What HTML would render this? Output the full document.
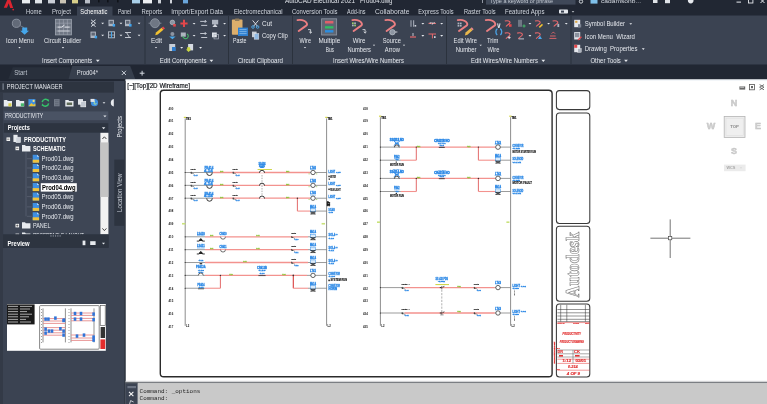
<!DOCTYPE html>
<html><head><meta charset="utf-8"><title>AutoCAD Electrical 2021 - Prod04.dwg</title>
<style>
html,body{margin:0;padding:0;background:#fff}
body{width:767px;height:404px;overflow:hidden;position:relative;font-family:"Liberation Sans",sans-serif}
text{white-space:pre}
</style></head><body>
<svg width="767" height="404" viewBox="0 0 767 404" style="position:absolute;left:0;top:0;display:block;will-change:transform" font-family='"Liberation Sans",sans-serif'>
<rect x="0" y="0" width="767" height="404" fill="#ffffff"/>
<rect x="0" y="0" width="767" height="16" fill="#212733"/>
<rect x="0" y="64" width="767" height="15.5" fill="#212733"/>
<rect x="0" y="15.5" width="767" height="49" fill="#3b4352"/>
<path d="M3.8 7.8 L7.2 0 L10.4 0 L13.2 8 L10.2 8 L8.7 3.2 L7 7.8 Z" fill="#dc2430"/>
<circle cx="13.2" cy="9.6" r="0.9" fill="#d8232f"/>
<rect x="22" y="0" width="8" height="3.4" fill="#e9ecf0"/>
<rect x="35" y="0" width="7" height="3.4" fill="#dfe3e8"/>
<rect x="48" y="0" width="7" height="3.4" fill="#c9ced6"/>
<rect x="60" y="0" width="6" height="3.4" fill="#c9c3b4"/>
<rect x="72" y="0" width="6" height="3.4" fill="#d8cf8a"/>
<rect x="85" y="0" width="5" height="3.4" fill="#b9bec7"/>
<rect x="132" y="0" width="8" height="3.4" fill="#a9cfe8"/>
<rect x="143" y="0" width="9" height="3.4" fill="#eef0f3"/>
<rect x="158" y="0" width="3" height="3.4" fill="#cfd3d9"/>
<rect x="170" y="0" width="2" height="3.4" fill="#cfd3d9"/>
<rect x="183" y="0" width="5" height="3.4" fill="#6aa6dc"/>
<rect x="98" y="0" width="1.6" height="2.4" fill="#0f1319"/>
<rect x="107" y="0" width="1.6" height="2.4" fill="#0f1319"/>
<rect x="117" y="0" width="1.6" height="2.4" fill="#0f1319"/>
<text x="285.0" y="2.6" font-size="6.6" fill="#e0e4ea" font-weight="normal" textLength="70.0" lengthAdjust="spacingAndGlyphs">AutoCAD Electrical 2021</text>
<text x="360.0" y="2.6" font-size="6.6" fill="#e0e4ea" font-weight="normal" textLength="32.5" lengthAdjust="spacingAndGlyphs">Prod04.dwg</text>
<rect x="486" y="0" width="89.5" height="4.6" fill="#3f4858"/>
<rect x="482.2" y="0" width="0.8" height="3" fill="#aeb5c0"/>
<text x="490.0" y="3.1" font-size="6" fill="#c3c9d3" font-weight="normal" textLength="63.0" lengthAdjust="spacingAndGlyphs">Type a keyword or phrase</text>
<circle cx="581" cy="1.5" r="1.7" fill="none" stroke="#dfe3e8" stroke-width="0.9"/>
<rect x="590.5" y="0" width="7" height="3.6" fill="#7fc0ea"/>
<text x="601.0" y="3.0" font-size="6" fill="#d5dae2" font-weight="normal" textLength="40.0" lengthAdjust="spacingAndGlyphs">cadamsonb...</text>
<rect x="653" y="0" width="4.5" height="3" fill="#dfe3e8"/>
<rect x="665" y="0" width="5" height="3.2" fill="#dfe3e8"/>
<circle cx="690.7" cy="0.6" r="2.8" fill="#e6e9ee"/>
<rect x="736.5" y="1.6" width="4.5" height="1" fill="#e6e9ee"/>
<rect x="748.5" y="-1" width="4.4" height="4" fill="none" stroke="#e6e9ee" stroke-width="0.9"/>
<path d="M760.5 -1l4 4m0 -4l-4 4" stroke="#e6e9ee" stroke-width="1"/>
<rect x="77" y="6.5" width="35.5" height="9.5" fill="#3b4352"/>
<text x="26.0" y="14.0" font-size="6.6" fill="#d3d8e0" font-weight="normal" textLength="15.7" lengthAdjust="spacingAndGlyphs">Home</text>
<text x="52.0" y="14.0" font-size="6.6" fill="#d3d8e0" font-weight="normal" textLength="19.0" lengthAdjust="spacingAndGlyphs">Project</text>
<text x="80.3" y="14.0" font-size="6.6" fill="#ffffff" font-weight="normal" textLength="27.1" lengthAdjust="spacingAndGlyphs">Schematic</text>
<text x="117.9" y="14.0" font-size="6.6" fill="#d3d8e0" font-weight="normal" textLength="13.1" lengthAdjust="spacingAndGlyphs">Panel</text>
<text x="141.6" y="14.0" font-size="6.6" fill="#d3d8e0" font-weight="normal" textLength="20.6" lengthAdjust="spacingAndGlyphs">Reports</text>
<text x="171.3" y="14.0" font-size="6.6" fill="#d3d8e0" font-weight="normal" textLength="51.7" lengthAdjust="spacingAndGlyphs">Import/Export Data</text>
<text x="234.0" y="14.0" font-size="6.6" fill="#d3d8e0" font-weight="normal" textLength="48.5" lengthAdjust="spacingAndGlyphs">Electromechanical</text>
<text x="292.0" y="14.0" font-size="6.6" fill="#d3d8e0" font-weight="normal" textLength="45.5" lengthAdjust="spacingAndGlyphs">Conversion Tools</text>
<text x="347.0" y="14.0" font-size="6.6" fill="#d3d8e0" font-weight="normal" textLength="18.5" lengthAdjust="spacingAndGlyphs">Add-ins</text>
<text x="375.0" y="14.0" font-size="6.6" fill="#d3d8e0" font-weight="normal" textLength="34.5" lengthAdjust="spacingAndGlyphs">Collaborate</text>
<text x="418.3" y="14.0" font-size="6.6" fill="#d3d8e0" font-weight="normal" textLength="35.2" lengthAdjust="spacingAndGlyphs">Express Tools</text>
<text x="464.0" y="14.0" font-size="6.6" fill="#d3d8e0" font-weight="normal" textLength="31.5" lengthAdjust="spacingAndGlyphs">Raster Tools</text>
<text x="505.0" y="14.0" font-size="6.6" fill="#d3d8e0" font-weight="normal" textLength="39.5" lengthAdjust="spacingAndGlyphs">Featured Apps</text>
<rect x="559" y="9.6" width="9" height="4" rx="0.8" fill="#e6e9ee"/>
<rect x="561" y="10.6" width="3" height="2" fill="#3b4352"/>
<path d="M571.7 11.2h2.6l-1.3 1.4z" fill="#e6e9ee"/>
<line x1="145" y1="16" x2="145" y2="64" stroke="#2b323d" stroke-width="1"/>
<line x1="228.5" y1="16" x2="228.5" y2="64" stroke="#2b323d" stroke-width="1"/>
<line x1="292.5" y1="16" x2="292.5" y2="64" stroke="#2b323d" stroke-width="1"/>
<line x1="446.5" y1="16" x2="446.5" y2="64" stroke="#2b323d" stroke-width="1"/>
<line x1="571" y1="16" x2="571" y2="64" stroke="#2b323d" stroke-width="1"/>
<circle cx="16.4" cy="23.3" r="4.1" fill="#626a78" stroke="#959daa" stroke-width="0.8"/>
<line x1="20" y1="25.6" x2="24" y2="27.6" stroke="#7f8794" stroke-width="0.8"/>
<path d="M22.2 27.6h5v3.2h1.8l-4.4 4-4.4-4h2z" fill="#45a6ea"/>
<text x="6.0" y="43.4" font-size="6.8" fill="#e6e9ee" font-weight="normal" textLength="27.7" lengthAdjust="spacingAndGlyphs">Icon Menu</text>
<path d="M18.3 47.1h2.4l-1.2 1.3z" fill="#e6e9ee"/>
<g transform="translate(0.6,0.4)"><rect x="54.8" y="18.9" width="16" height="15.6" fill="#6f7784" stroke="#9da4af" stroke-width="0.8"/>
<line x1="55" y1="22.8" x2="70.6" y2="22.8" stroke="#a9afba" stroke-width="0.5"/>
<line x1="55" y1="26.7" x2="70.6" y2="26.7" stroke="#a9afba" stroke-width="0.5"/>
<line x1="55" y1="30.6" x2="70.6" y2="30.6" stroke="#a9afba" stroke-width="0.5"/>
<line x1="58.8" y1="19" x2="58.8" y2="34.4" stroke="#a9afba" stroke-width="0.5"/>
<line x1="62.8" y1="19" x2="62.8" y2="34.4" stroke="#a9afba" stroke-width="0.5"/>
<line x1="66.8" y1="19" x2="66.8" y2="34.4" stroke="#a9afba" stroke-width="0.5"/>
<line x1="57" y1="26.7" x2="61" y2="26.7" stroke="#e6e9ee" stroke-width="0.9"/>
<line x1="61" y1="26.7" x2="64" y2="24.6" stroke="#e6e9ee" stroke-width="0.9"/>
<line x1="64" y1="26.7" x2="69" y2="26.7" stroke="#e6e9ee" stroke-width="0.9"/>
<line x1="57" y1="30.6" x2="69" y2="30.6" stroke="#d5d9e0" stroke-width="0.8"/>
</g>
<text x="44.0" y="43.4" font-size="6.8" fill="#e6e9ee" font-weight="normal" textLength="37.2" lengthAdjust="spacingAndGlyphs">Circuit Builder</text>
<path d="M61.8 47.1h2.4l-1.2 1.3z" fill="#e6e9ee"/>
<path d="M91.0 19.8l4.6 3.4l-4.6 3.4m4.6-6.8l-4.6 3.4l4.6 3.4" fill="none" stroke="#cfd4dc" stroke-width="1"/>
<path d="M101.2 22.7h2.9l-1.4 1.6z" fill="#e6e9ee"/>
<rect x="90.5" y="31.6" width="5.4" height="6.4" fill="#aeb5c0"/>
<rect x="91.5" y="32.6" width="3.4" height="3" fill="#5f6775"/>
<rect x="94.7" y="35.8" width="2.4" height="2.6" fill="#3fa3ec"/>
<path d="M101.2 34.7h2.9l-1.4 1.6z" fill="#e6e9ee"/>
<rect x="108.5" y="19.8" width="5.4" height="6.4" fill="#aeb5c0"/>
<rect x="109.5" y="20.8" width="3.4" height="3" fill="#5f6775"/>
<rect x="112.7" y="24.0" width="2.4" height="2.6" fill="#3fa3ec"/>
<path d="M119.5 22.7h2.9l-1.4 1.6z" fill="#e6e9ee"/>
<rect x="108.5" y="31.8" width="6" height="6" fill="none" stroke="#b9c0ca" stroke-width="0.9"/>
<line x1="108.5" y1="35" x2="114.5" y2="35" stroke="#b9c0ca" stroke-width="0.8"/>
<line x1="111.5" y1="31.8" x2="111.5" y2="38" stroke="#49a8ea" stroke-width="1"/>
<path d="M119.5 34.7h2.9l-1.4 1.6z" fill="#e6e9ee"/>
<rect x="125" y="19.8" width="5.4" height="6.4" fill="#aeb5c0"/>
<rect x="126" y="20.8" width="3.4" height="3" fill="#5f6775"/>
<rect x="129.2" y="24.0" width="2.4" height="2.6" fill="#3fa3ec"/>
<path d="M137.6 22.7h2.9l-1.4 1.6z" fill="#e6e9ee"/>
<path d="M125 32.5h6m-6 5h6m-4.5-5l3 5" fill="none" stroke="#cfd4dc" stroke-width="0.9"/>
<path d="M137.6 34.7h2.9l-1.4 1.6z" fill="#e6e9ee"/>
<text x="42.0" y="62.8" font-size="6.8" fill="#e6e9ee" font-weight="normal" textLength="50.3" lengthAdjust="spacingAndGlyphs">Insert Components</text>
<path d="M95.9 59.8h3.8l-1.9 2.1z" fill="#e6e9ee"/>
<circle cx="155" cy="23.2" r="4.5" fill="#6f7784" stroke="#98a0ac" stroke-width="0.7"/>
<line x1="150" y1="23.2" x2="148.6" y2="23.2" stroke="#98a0ac" stroke-width="0.8"/>
<line x1="160" y1="23.2" x2="161.4" y2="23.2" stroke="#98a0ac" stroke-width="0.8"/>
<path d="M156 32.4l5.6-4.6 1.8 2-5.6 4.6-2.6 0.8z" fill="#f2c230"/>
<path d="M161.6 27.8l1.6-1.3 1.8 2-1.6 1.3z" fill="#e2474b"/>
<text x="150.9" y="43.4" font-size="6.8" fill="#e6e9ee" font-weight="normal" textLength="11.1" lengthAdjust="spacingAndGlyphs">Edit</text>
<path d="M154.8 47.0h2.4l-1.2 1.3z" fill="#e6e9ee"/>
<circle cx="172.4" cy="22.4" r="2.3" fill="#8d95a2" stroke="#c3c9d2" stroke-width="0.6"/>
<rect x="173.20000000000002" y="24.0" width="2.6" height="2.6" fill="#e2474b"/>
<circle cx="172.4" cy="34.1" r="2" fill="#8d95a2"/>
<path d="M169.20000000000002 36.5h6.4l-3.2 2.8z" fill="#49a8ea"/>
<path d="M180.4 22.4h7.2v2h-7.2zM183 19.799999999999997h2v7.2h-2z" fill="#e2474b"/>
<rect x="180.8" y="32.5" width="5" height="4.2" fill="#aeb5c0"/>
<path d="M183 35.9a2.6 2.6 0 1 0 4 -2" fill="none" stroke="#46b86a" stroke-width="1.1"/>
<path d="M200.2 21.4h6l-1.4-1.4m1.4 1.4l-1.4 1.4M207.2 25.4h-6" fill="none" stroke="#cfd4dc" stroke-width="0.9"/>
<path d="M200.2 33.5h6l-1.4-1.4m1.4 1.4l-1.4 1.4M207.2 37.5h-6" fill="none" stroke="#cfd4dc" stroke-width="0.9"/>
<rect x="212" y="19.799999999999997" width="6.2" height="4.6" fill="#aeb5c0"/>
<path d="M215 23.799999999999997l2.6 3.2h-5.2z" fill="#cfd4dc"/>
<rect x="212" y="32.5" width="4.8" height="4.8" fill="#dfe3e9"/>
<rect x="214" y="34.5" width="4.4" height="4.4" fill="none" stroke="#aeb5c0" stroke-width="0.7"/>
<path d="M192.6 22.9h2.9l-1.4 1.6z" fill="#e6e9ee"/>
<path d="M192.6 35.0h2.9l-1.4 1.6z" fill="#e6e9ee"/>
<path d="M223.1 22.9h2.9l-1.4 1.6z" fill="#e6e9ee"/>
<path d="M223.1 35.0h2.9l-1.4 1.6z" fill="#e6e9ee"/>
<rect x="169.20000000000002" y="44.0" width="6" height="7" fill="#c8ced7"/>
<rect x="172.0" y="47.0" width="3.6" height="4" fill="#2f7fd0"/>
<path d="M180.2 47.1h2.9l-1.4 1.6z" fill="#e6e9ee"/>
<rect x="188.1" y="44.0" width="5" height="6.4" fill="#d6dbe2"/>
<path d="M187.1 47.2h3v2.4h1.2l-2.7 2.4-2.7-2.4h1.2z" fill="#c9d644"/>
<path d="M199.1 47.1h2.9l-1.4 1.6z" fill="#e6e9ee"/>
<text x="159.8" y="62.8" font-size="6.8" fill="#e6e9ee" font-weight="normal" textLength="46.7" lengthAdjust="spacingAndGlyphs">Edit Components</text>
<path d="M209.5 59.8h3.8l-1.9 2.1z" fill="#e6e9ee"/>
<rect x="231.9" y="19.6" width="10.6" height="15.2" rx="0.8" fill="#dcae6c"/>
<rect x="235" y="18.4" width="4.4" height="2.6" rx="0.6" fill="#8f7a5a"/>
<rect x="238" y="27.6" width="10" height="8.4" fill="#2f7fd0"/>
<line x1="239.4" y1="29.6" x2="246.6" y2="29.6" stroke="#a9d2f4" stroke-width="0.6"/>
<line x1="239.4" y1="31.6" x2="246.6" y2="31.6" stroke="#a9d2f4" stroke-width="0.6"/>
<line x1="239.4" y1="33.6" x2="246.6" y2="33.6" stroke="#a9d2f4" stroke-width="0.6"/>
<text x="233.0" y="43.4" font-size="6.8" fill="#e6e9ee" font-weight="normal" textLength="13.5" lengthAdjust="spacingAndGlyphs">Paste</text>
<path d="M252.6 20.4l5 6m0.8-6l-5 6" stroke="#e6e9ee" stroke-width="0.9" fill="none"/>
<circle cx="253" cy="27" r="1.3" fill="none" stroke="#49a8ea" stroke-width="0.9"/><circle cx="257.6" cy="27" r="1.3" fill="none" stroke="#49a8ea" stroke-width="0.9"/>
<text x="262.0" y="26.0" font-size="6.8" fill="#e6e9ee" font-weight="normal" textLength="10.0" lengthAdjust="spacingAndGlyphs">Cut</text>
<rect x="252" y="31.6" width="4.6" height="5.6" fill="#c8ced7"/><rect x="254.2" y="33.6" width="4.6" height="5.6" fill="#8fb9e4" stroke="#dfe3e9" stroke-width="0.5"/>
<text x="262.0" y="38.0" font-size="6.8" fill="#e6e9ee" font-weight="normal" textLength="25.8" lengthAdjust="spacingAndGlyphs">Copy Clip</text>
<text x="237.7" y="62.8" font-size="6.8" fill="#e6e9ee" font-weight="normal" textLength="45.3" lengthAdjust="spacingAndGlyphs">Circuit Clipboard</text>
<path d="M297.5 20.1C301.0 19.6 305.1 20.6 306.8 23.2C307.6 24.7 306.4 25.8 305.2 26.4L298.7 31.0" fill="none" stroke="#ec7f82" stroke-width="1.9" stroke-linecap="round" stroke-linejoin="round"/>
<path d="M308 29.6h2.6v3.4m-1.4-1.2l1.4 1.4 1.4-1.4" fill="none" stroke="#e6e9ee" stroke-width="0.8"/>
<text x="299.6" y="43.4" font-size="6.8" fill="#e6e9ee" font-weight="normal" textLength="11.4" lengthAdjust="spacingAndGlyphs">Wire</text>
<path d="M303.8 47.0h2.4l-1.2 1.3z" fill="#e6e9ee"/>
<rect x="321.6" y="18.8" width="15" height="16.2" fill="#5f6673" stroke="#8a92a0" stroke-width="0.9"/>
<rect x="325" y="20.9" width="8.4" height="2.6" fill="#e0606a"/>
<rect x="325" y="26.2" width="8.4" height="2.3" fill="#2fc063"/>
<rect x="325" y="30.1" width="8.4" height="2.4" fill="#2c8de0"/>
<text x="318.4" y="43.4" font-size="6.8" fill="#e6e9ee" font-weight="normal" textLength="21.9" lengthAdjust="spacingAndGlyphs">Multiple</text>
<text x="325.7" y="51.9" font-size="6.8" fill="#e6e9ee" font-weight="normal" textLength="8.3" lengthAdjust="spacingAndGlyphs">Bus</text>
<path d="M352.4 20.1C355.9 19.6 360.0 20.6 361.7 23.2C362.5 24.7 361.3 25.8 360.1 26.4L353.6 31.0" fill="none" stroke="#ec7f82" stroke-width="1.9" stroke-linecap="round" stroke-linejoin="round"/>
<rect x="352" y="22.4" width="1.7" height="1.7" fill="#9fd06a"/>
<rect x="354.2" y="22.4" width="1.7" height="1.7" fill="#aeb5c0"/>
<rect x="352" y="24.6" width="1.7" height="1.7" fill="#aeb5c0"/>
<rect x="354.2" y="24.6" width="1.7" height="1.7" fill="#9fd06a"/>
<path d="M362.5 29.6h2.6v3.4m-1.4-1.2l1.4 1.4 1.4-1.4" fill="none" stroke="#e6e9ee" stroke-width="0.8"/>
<text x="352.8" y="43.4" font-size="6.8" fill="#e6e9ee" font-weight="normal" textLength="12.6" lengthAdjust="spacingAndGlyphs">Wire</text>
<text x="347.6" y="51.9" font-size="6.8" fill="#e6e9ee" font-weight="normal" textLength="23.4" lengthAdjust="spacingAndGlyphs">Numbers</text>
<path d="M372.8 44.8h2.4l-1.2 1.3z" fill="#e6e9ee"/>
<path d="M385.4 20.1C388.9 19.6 393.0 20.6 394.7 23.2C395.5 24.7 394.3 25.8 393.1 26.4L386.6 31.0" fill="none" stroke="#ec7f82" stroke-width="1.9" stroke-linecap="round" stroke-linejoin="round"/>
<circle cx="392.4" cy="32.2" r="2.7" fill="#8d95a2" stroke="#c8ced7" stroke-width="0.6"/>
<line x1="395" y1="32" x2="397.4" y2="32" stroke="#e6e9ee" stroke-width="0.8"/>
<text x="382.7" y="43.4" font-size="6.8" fill="#e6e9ee" font-weight="normal" textLength="18.2" lengthAdjust="spacingAndGlyphs">Source</text>
<text x="384.8" y="51.9" font-size="6.8" fill="#e6e9ee" font-weight="normal" textLength="15.0" lengthAdjust="spacingAndGlyphs">Arrow</text>
<path d="M402.8 44.8h2.4l-1.2 1.3z" fill="#e6e9ee"/>
<path d="M411 20.2v6.6m2.6-6.6v6.6" stroke="#9aa1ad" stroke-width="1.2"/>
<rect x="414.6" y="25" width="1.6" height="1.6" fill="#cfd4dc"/>
<path d="M421.4 22.9h2.9l-1.4 1.6z" fill="#e6e9ee"/>
<line x1="428.5" y1="23.4" x2="436" y2="23.4" stroke="#e8686c" stroke-width="1"/>
<text x="429.6" y="23.8" font-size="3.4" fill="#e6e9ee" font-weight="normal" textLength="5.4" lengthAdjust="spacingAndGlyphs">xyz</text>
<path d="M440.2 22.9h2.9l-1.4 1.6z" fill="#e6e9ee"/>
<line x1="410" y1="37" x2="416" y2="37" stroke="#e8686c" stroke-width="1.2"/>
<line x1="413" y1="33" x2="413" y2="36" stroke="#cfd4dc" stroke-width="0.9"/>
<path d="M421.4 35.1h2.9l-1.4 1.6z" fill="#e6e9ee"/>
<line x1="428.5" y1="34" x2="436" y2="34" stroke="#e8686c" stroke-width="1"/>
<line x1="432.4" y1="34" x2="432.4" y2="38.4" stroke="#e8686c" stroke-width="1"/>
<rect x="434" y="36.2" width="1.6" height="1.8" fill="#cfd4dc"/>
<path d="M440.2 35.1h2.9l-1.4 1.6z" fill="#e6e9ee"/>
<text x="333.0" y="62.8" font-size="6.8" fill="#e6e9ee" font-weight="normal" textLength="71.0" lengthAdjust="spacingAndGlyphs">Insert Wires/Wire Numbers</text>
<path d="M457.8 20.1C461.3 19.6 465.4 20.6 467.1 23.2C467.9 24.7 466.7 25.8 465.5 26.4L459.0 31.0" fill="none" stroke="#ec7f82" stroke-width="1.9" stroke-linecap="round" stroke-linejoin="round"/>
<rect x="457.6" y="22.6" width="1.7" height="1.7" fill="#aeb5c0"/>
<rect x="459.9" y="22.6" width="1.7" height="1.7" fill="#aeb5c0"/>
<rect x="457.6" y="24.9" width="1.7" height="1.7" fill="#aeb5c0"/>
<rect x="459.9" y="24.9" width="1.7" height="1.7" fill="#aeb5c0"/>
<path d="M465.6 32.6l5-4.4 1.9 2.1-5 4.4-2.6 0.8z" fill="#e9b84c"/><path d="M470.6 28.2l1.2-1 1.9 2.1-1.2 1z" fill="#e98a8e"/>
<text x="453.6" y="43.4" font-size="6.8" fill="#e6e9ee" font-weight="normal" textLength="23.4" lengthAdjust="spacingAndGlyphs">Edit Wire</text>
<text x="455.7" y="51.9" font-size="6.8" fill="#e6e9ee" font-weight="normal" textLength="20.8" lengthAdjust="spacingAndGlyphs">Number</text>
<path d="M479.5 44.8h2.4l-1.2 1.3z" fill="#e6e9ee"/>
<path d="M485.8 20.1C489.3 19.6 493.4 20.6 495.1 23.2C495.9 24.7 494.7 25.8 493.5 26.4L487.0 31.0" fill="none" stroke="#ec7f82" stroke-width="1.9" stroke-linecap="round" stroke-linejoin="round"/>
<path d="M497.4 28.6c-2 1.4-2 4.6-0.2 6.4M500.2 28.6c2 1.4 2 4.6 0.2 6.4" fill="none" stroke="#4aa3e6" stroke-width="1.3"/>
<path d="M497.6 23.4l1 4.6M500 23.4l-1 4.6" stroke="#d5dae2" stroke-width="1.1"/>
<text x="487.0" y="42.6" font-size="6.8" fill="#e6e9ee" font-weight="normal" textLength="11.5" lengthAdjust="spacingAndGlyphs">Trim</text>
<text x="487.6" y="51.9" font-size="6.8" fill="#e6e9ee" font-weight="normal" textLength="11.9" lengthAdjust="spacingAndGlyphs">Wire</text>
<path d="M504.8 21.0c3-0.8 5.4 0 5.2 1.6c-0.2 1.4-3 2.2-4 4" fill="none" stroke="#e8686c" stroke-width="1.1"/>
<rect x="509.0" y="24.2" width="2.6" height="2.6" fill="#e2474b"/>
<rect x="518" y="19.8" width="4" height="7" fill="#6f7784"/>
<path d="M524 24.4v3.2m-1.6-1.6h3.2" stroke="#46b86a" stroke-width="1"/>
<path d="M528.5 22.9h2.9l-1.4 1.6z" fill="#e6e9ee"/>
<path d="M535.0 21.0c3-0.8 5.4 0 5.2 1.6c-0.2 1.4-3 2.2-4 4" fill="none" stroke="#e8686c" stroke-width="1.1"/>
<path d="M538.8 26.799999999999997l3.2-3 1 1.1-3.2 3z" fill="#f2c230"/>
<path d="M547.1 22.9h2.9l-1.4 1.6z" fill="#e6e9ee"/>
<path d="M552.6 21.0c3-0.8 5.4 0 5.2 1.6c-0.2 1.4-3 2.2-4 4" fill="none" stroke="#e8686c" stroke-width="1.1"/>
<rect x="557.4" y="23.799999999999997" width="1.8" height="3.2" fill="#aeb5c0"/>
<path d="M564.8 22.9h2.9l-1.4 1.6z" fill="#e6e9ee"/>
<path d="M504.8 33.1c3-0.8 5.4 0 5.2 1.6c-0.2 1.4-3 2.2-4 4" fill="none" stroke="#e8686c" stroke-width="1.1"/>
<path d="M509.2 36.1v3m-1.5-1.5h3" stroke="#e6e9ee" stroke-width="0.8"/>
<path d="M517.2 33.1c3-0.8 5.4 0 5.2 1.6c-0.2 1.4-3 2.2-4 4" fill="none" stroke="#e8686c" stroke-width="1.1"/>
<line x1="518.6" y1="38.9" x2="524.0" y2="38.9" stroke="#cfd4dc" stroke-width="0.9"/>
<path d="M528.5 35.1h2.9l-1.4 1.6z" fill="#e6e9ee"/>
<path d="M535.0 33.1c3-0.8 5.4 0 5.2 1.6c-0.2 1.4-3 2.2-4 4" fill="none" stroke="#e8686c" stroke-width="1.1"/>
<path d="M538.0 39.1l2-3.4 2 3.4z" fill="#49a8ea"/>
<path d="M549.4 38.4h7M550 36h5.6M551.6 33.6c1-1.6 2.6-1.6 3.4 0" fill="none" stroke="#e8686c" stroke-width="0.9"/>
<text x="470.9" y="62.8" font-size="6.8" fill="#e6e9ee" font-weight="normal" textLength="67.1" lengthAdjust="spacingAndGlyphs">Edit Wires/Wire Numbers</text>
<path d="M541.4 59.8h3.8l-1.9 2.1z" fill="#e6e9ee"/>
<rect x="574.2" y="19.8" width="6" height="7.4" fill="#e4e7ec"/>
<rect x="575.2" y="20.8" width="2.2" height="2" fill="#d9a441"/><rect x="578.0" y="24.200000000000003" width="3.2" height="3.2" fill="#7d8593"/>
<text x="584.8" y="26.3" font-size="7.2" fill="#e6e9ee" font-weight="normal" textLength="40.2" lengthAdjust="spacingAndGlyphs">Symbol Builder</text>
<path d="M629.3 23.2h2.9l-1.4 1.6z" fill="#e6e9ee"/>
<rect x="574.2" y="32.1" width="6" height="7.4" fill="#e4e7ec"/>
<rect x="575.0" y="32.9" width="4.4" height="4.4" fill="#8a919d"/><path d="M577.6 39.5l3.4-3.2 0.9 1-3.4 3.2z" fill="#e2474b"/>
<text x="584.8" y="38.5" font-size="7.2" fill="#e6e9ee" font-weight="normal" textLength="50.0" lengthAdjust="spacingAndGlyphs">Icon Menu  Wizard</text>
<rect x="574.2" y="44.800000000000004" width="6" height="7.4" fill="#e4e7ec"/>
<rect x="574.2" y="44.800000000000004" width="3" height="3" fill="#e2474b"/><rect x="577.8000000000001" y="48.6" width="3.4" height="3.6" fill="#aeb5c0" stroke="#fff" stroke-width="0.4"/>
<text x="584.8" y="51.4" font-size="7.2" fill="#e6e9ee" font-weight="normal" textLength="52.6" lengthAdjust="spacingAndGlyphs">Drawing  Properties</text>
<path d="M641.8 48.3h2.9l-1.4 1.6z" fill="#e6e9ee"/>
<text x="590.5" y="62.8" font-size="6.8" fill="#e6e9ee" font-weight="normal" textLength="30.3" lengthAdjust="spacingAndGlyphs">Other Tools</text>
<path d="M624.1 59.8h3.8l-1.9 2.1z" fill="#e6e9ee"/>
<path d="M8.4 79l4.4-11.8h57.2l3 11.8z" fill="#29303c"/>
<path d="M68.6 79l3.6-13h58l5 13z" fill="#373f4d"/>
<text x="14.2" y="75.4" font-size="6.6" fill="#b9c0ca" font-weight="normal" textLength="12.9" lengthAdjust="spacingAndGlyphs">Start</text>
<text x="76.8" y="75.4" font-size="6.6" fill="#dde1e7" font-weight="normal" textLength="21.2" lengthAdjust="spacingAndGlyphs">Prod04*</text>
<path d="M121.8 70.8l4.2 4.2m0-4.2l-4.2 4.2" stroke="#d5dae2" stroke-width="0.9"/>
<path d="M139.7 73.2h4.8m-2.4-2.4v4.8" stroke="#d5dae2" stroke-width="1"/>
<rect x="0" y="80.6" width="125.4" height="323.4" fill="#3b4352"/>
<rect x="0" y="79" width="125.4" height="2" fill="#212733"/>
<rect x="0" y="81.6" width="114" height="11" fill="#2d3440"/>
<rect x="0" y="92.6" width="3" height="311.4" fill="#333a47"/>
<rect x="2.6" y="83.4" width="1" height="6.4" fill="#8d95a2"/>
<text x="6.7" y="89.1" font-size="6.8" fill="#e6e9ee" font-weight="normal" textLength="55.9" lengthAdjust="spacingAndGlyphs">PROJECT MANAGER</text>
<rect x="124.4" y="80.6" width="1.2" height="323.4" fill="#2b323d"/>
<path d="M3.8 100.10000000000001h3l1 1h4.2v5.4h-8.2z" fill="#e8ebef"/>
<rect x="8.4" y="103.3" width="3" height="3" fill="#d9d04a"/>
<path d="M16 100.10000000000001h3l1 1h4.2v5.4h-8.2z" fill="#e8ebef"/>
<rect x="20.8" y="103.3" width="3.2" height="3" fill="#46b86a"/>
<rect x="28.4" y="99.10000000000001" width="7" height="7.2" fill="#3f8fe0"/><path d="M28.4 106.3l3-3.4 2 1.8 2-1.2v2.8z" fill="#e8c23a"/><circle cx="33.6" cy="100.9" r="1.1" fill="#f0e27a"/>
<path d="M42.199999999999996 102.10000000000001a3.4 3.4 0 0 1 6 -1.6M48.6 103.3a3.4 3.4 0 0 1 -6 1.6" fill="none" stroke="#35c26a" stroke-width="1.5"/>
<path d="M46.8 99.3l2.4 0.4-0.6 2.4zM44.0 106.10000000000001l-2.4-0.4 0.6-2.4z" fill="#35c26a"/>
<rect x="54.0" y="99.10000000000001" width="5.6" height="7.2" fill="#737b88"/>
<line x1="55.0" y1="100.7" x2="58.599999999999994" y2="100.7" stroke="#555d6a" stroke-width="0.6"/>
<line x1="55.0" y1="102.7" x2="58.599999999999994" y2="102.7" stroke="#555d6a" stroke-width="0.6"/>
<line x1="55.0" y1="104.7" x2="58.599999999999994" y2="104.7" stroke="#555d6a" stroke-width="0.6"/>
<path d="M65.3 100.10000000000001h3l1 1h4.2v5.4h-8.2z" fill="#e8ebef"/>
<rect x="66.7" y="102.5" width="5.4" height="2.6" fill="#5f6b58"/>
<rect x="78.0" y="99.10000000000001" width="5" height="5.6" fill="#dfe3e9"/><rect x="80.8" y="101.3" width="5" height="5.6" fill="#c3c9d2" stroke="#fff" stroke-width="0.5"/>
<circle cx="94.5" cy="102.7" r="3.6" fill="#3f8fe0"/><path d="M92.1 101.7c1.6-1.6 3-0.4 2.2 1s1 2 2.2 0.6" fill="none" stroke="#9fd6a6" stroke-width="1.1"/>
<rect x="90.5" y="98.9" width="4" height="3" fill="#dfe3e9"/>
<path d="M102.6 102.3h2.8l-1.4 1.5z" fill="#e6e9ee"/>
<path d="M113.8 99a3.9 3.9 0 0 0 0 7.6z" fill="#e8ebef"/>
<rect x="3.8" y="111.4" width="104.5" height="8.8" fill="#4a5364"/>
<text x="4.9" y="118.4" font-size="6.6" fill="#e6e9ee" font-weight="normal" textLength="38.4" lengthAdjust="spacingAndGlyphs">PRODUCTIVITY</text>
<path d="M103.3 115.4h3.2l-1.6 1.8z" fill="#e6e9ee"/>
<rect x="3.8" y="123.2" width="104.5" height="9.6" fill="#2d3440"/>
<text x="7.8" y="130.4" font-size="6.6" fill="#ffffff" font-weight="bold" textLength="22.0" lengthAdjust="spacingAndGlyphs">Projects</text>
<path d="M101.9 127.3h3.4l-1.7 1.9z" fill="#e6e9ee"/>
<rect x="3.8" y="132.8" width="96.6" height="101.6" fill="#3e4655"/>
<rect x="100.4" y="132.8" width="8" height="101.6" fill="#f2f2f2"/>
<rect x="100.4" y="142.4" width="8" height="54.6" fill="#c4c4c4"/>
<path d="M102.4 139l2-2.2 2 2.2" fill="none" stroke="#333" stroke-width="0.9"/>
<path d="M102.4 228.4l2 2.2 2-2.2" fill="none" stroke="#333" stroke-width="0.9"/>
<rect x="6.500000000000001" y="137.39999999999998" width="3.6" height="3.6" fill="#f4f4f4"/>
<line x1="7.200000000000001" y1="139.2" x2="9.4" y2="139.2" stroke="#333" stroke-width="0.6"/>
<rect x="13.4" y="134.8" width="4.2" height="7.2" fill="#e8ebef"/><rect x="16" y="137.2" width="4.4" height="5.4" fill="#cfd4dc" stroke="#e8ebef" stroke-width="0.6"/>
<text x="23.9" y="141.6" font-size="6.6" fill="#ffffff" font-weight="bold" textLength="42.0" lengthAdjust="spacingAndGlyphs">PRODUCTIVITY</text>
<rect x="15.5" y="146.6" width="3.6" height="3.6" fill="#f4f4f4"/>
<line x1="16.2" y1="148.4" x2="18.400000000000002" y2="148.4" stroke="#333" stroke-width="0.6"/>
<path d="M22 145h3l0.8 1h4.6v5.4h-8.4z" fill="#e8ebef"/>
<text x="32.9" y="150.8" font-size="6.6" fill="#ffffff" font-weight="bold" textLength="32.6" lengthAdjust="spacingAndGlyphs">SCHEMATIC</text>
<line x1="26" y1="152" x2="26" y2="216.3" stroke="#6a7280" stroke-width="0.5"/>
<path d="M32.699999999999996 154.7h4.4l2 2v6h-6.4z" fill="#3f8fe0"/><path d="M32.699999999999996 159.7h6.4v3h-6.4z" fill="#f0c23a"/><path d="M37.1 154.7v2h2z" fill="#cfe2f6"/>
<line x1="26.9" y1="158.7" x2="31.9" y2="158.7" stroke="#6a7280" stroke-width="0.5"/>
<text x="41.6" y="161.1" font-size="6.6" fill="#e6e9ee" font-weight="normal" textLength="32.1" lengthAdjust="spacingAndGlyphs">Prod01.dwg</text>
<path d="M32.699999999999996 164h4.4l2 2v6h-6.4z" fill="#3f8fe0"/><path d="M32.699999999999996 169h6.4v3h-6.4z" fill="#f0c23a"/><path d="M37.1 164v2h2z" fill="#cfe2f6"/>
<line x1="26.9" y1="168" x2="31.9" y2="168" stroke="#6a7280" stroke-width="0.5"/>
<text x="41.6" y="170.4" font-size="6.6" fill="#e6e9ee" font-weight="normal" textLength="32.1" lengthAdjust="spacingAndGlyphs">Prod02.dwg</text>
<path d="M32.699999999999996 173.3h4.4l2 2v6h-6.4z" fill="#3f8fe0"/><path d="M32.699999999999996 178.3h6.4v3h-6.4z" fill="#f0c23a"/><path d="M37.1 173.3v2h2z" fill="#cfe2f6"/>
<line x1="26.9" y1="177.3" x2="31.9" y2="177.3" stroke="#6a7280" stroke-width="0.5"/>
<text x="41.6" y="179.7" font-size="6.6" fill="#e6e9ee" font-weight="normal" textLength="32.1" lengthAdjust="spacingAndGlyphs">Prod03.dwg</text>
<path d="M32.699999999999996 183.1h4.4l2 2v6h-6.4z" fill="#3f8fe0"/><path d="M32.699999999999996 188.1h6.4v3h-6.4z" fill="#f0c23a"/><path d="M37.1 183.1v2h2z" fill="#cfe2f6"/>
<line x1="26.9" y1="187.1" x2="31.9" y2="187.1" stroke="#6a7280" stroke-width="0.5"/>
<rect x="40.8" y="183.2" width="36" height="8.4" fill="#ffffff"/>
<text x="42.0" y="189.5" font-size="6.6" fill="#000000" font-weight="bold" textLength="33.5" lengthAdjust="spacingAndGlyphs">Prod04.dwg</text>
<path d="M32.699999999999996 192.6h4.4l2 2v6h-6.4z" fill="#3f8fe0"/><path d="M32.699999999999996 197.6h6.4v3h-6.4z" fill="#f0c23a"/><path d="M37.1 192.6v2h2z" fill="#cfe2f6"/>
<line x1="26.9" y1="196.6" x2="31.9" y2="196.6" stroke="#6a7280" stroke-width="0.5"/>
<text x="41.6" y="199.0" font-size="6.6" fill="#e6e9ee" font-weight="normal" textLength="32.1" lengthAdjust="spacingAndGlyphs">Prod05.dwg</text>
<path d="M32.699999999999996 202.9h4.4l2 2v6h-6.4z" fill="#3f8fe0"/><path d="M32.699999999999996 207.9h6.4v3h-6.4z" fill="#f0c23a"/><path d="M37.1 202.9v2h2z" fill="#cfe2f6"/>
<line x1="26.9" y1="206.9" x2="31.9" y2="206.9" stroke="#6a7280" stroke-width="0.5"/>
<text x="41.6" y="209.3" font-size="6.6" fill="#e6e9ee" font-weight="normal" textLength="32.1" lengthAdjust="spacingAndGlyphs">Prod06.dwg</text>
<path d="M32.699999999999996 212.3h4.4l2 2v6h-6.4z" fill="#3f8fe0"/><path d="M32.699999999999996 217.3h6.4v3h-6.4z" fill="#f0c23a"/><path d="M37.1 212.3v2h2z" fill="#cfe2f6"/>
<line x1="26.9" y1="216.3" x2="31.9" y2="216.3" stroke="#6a7280" stroke-width="0.5"/>
<text x="41.6" y="218.7" font-size="6.6" fill="#e6e9ee" font-weight="normal" textLength="32.1" lengthAdjust="spacingAndGlyphs">Prod07.dwg</text>
<rect x="15.5" y="223.79999999999998" width="3.6" height="3.6" fill="#f4f4f4"/>
<line x1="16.2" y1="225.6" x2="18.400000000000002" y2="225.6" stroke="#333" stroke-width="0.6"/>
<line x1="17.3" y1="224.5" x2="17.3" y2="226.7" stroke="#333" stroke-width="0.6"/>
<path d="M22 222.2h3l0.8 1h4.6v5.4h-8.4z" fill="#e8ebef"/>
<text x="32.9" y="228.0" font-size="6.6" fill="#e6e9ee" font-weight="normal" textLength="17.6" lengthAdjust="spacingAndGlyphs">PANEL</text>
<clipPath id="trc"><rect x="3.8" y="132.8" width="96.6" height="101.6"/></clipPath>
<g clip-path="url(#trc)">
<rect x="15.5" y="233.6" width="3.6" height="3.6" fill="#f4f4f4"/>
<line x1="16.2" y1="235.4" x2="18.400000000000002" y2="235.4" stroke="#333" stroke-width="0.6"/>
<line x1="17.3" y1="234.3" x2="17.3" y2="236.5" stroke="#333" stroke-width="0.6"/>
<path d="M22 232.4h3l0.8 1h4.6v5.4h-8.4z" fill="#e8ebef"/>
<text x="32.9" y="238.0" font-size="6.6" fill="#e6e9ee" font-weight="normal" textLength="51.1" lengthAdjust="spacingAndGlyphs">RECEPTACLE LAYOUT</text>
</g>
<rect x="3" y="234.3" width="105.8" height="13.6" fill="#2d3440"/>
<rect x="50.4" y="235.4" width="1.1" height="1.1" fill="#9aa2af"/>
<rect x="52.699999999999996" y="235.4" width="1.1" height="1.1" fill="#9aa2af"/>
<rect x="55.0" y="235.4" width="1.1" height="1.1" fill="#9aa2af"/>
<rect x="57.3" y="235.4" width="1.1" height="1.1" fill="#9aa2af"/>
<rect x="59.599999999999994" y="235.4" width="1.1" height="1.1" fill="#9aa2af"/>
<text x="7.4" y="245.6" font-size="6.6" fill="#ffffff" font-weight="bold" textLength="22.3" lengthAdjust="spacingAndGlyphs">Preview</text>
<rect x="82.6" y="240.6" width="2.8" height="4.6" fill="#e8ebef"/><rect x="90.2" y="241.2" width="5.4" height="3.8" fill="#e8ebef"/>
<path d="M102.0 242.7h3.0l-1.5 1.7z" fill="#e6e9ee"/>
<rect x="114.3" y="159.6" width="10.1" height="66.2" fill="#2d3440"/>
<text transform="translate(121.6,137.6) rotate(-90)" font-size="6.4" fill="#e6e9ee" textLength="21.5" lengthAdjust="spacingAndGlyphs">Projects</text>
<text transform="translate(121.8,212) rotate(-90)" font-size="6.4" fill="#c8ced7" textLength="38.5" lengthAdjust="spacingAndGlyphs">Location View</text>
<rect x="7" y="304" width="98.8" height="46.8" fill="#ffffff"/>
<rect x="7" y="304.4" width="27.6" height="20" fill="#1a1a1a"/>
<line x1="8" y1="306.4" x2="18" y2="306.4" stroke="#e8e8e8" stroke-width="0.7"/>
<line x1="20" y1="306.4" x2="32" y2="306.4" stroke="#e8e8e8" stroke-width="0.7"/>
<line x1="8" y1="309.0" x2="18" y2="309.0" stroke="#e8e8e8" stroke-width="0.7"/>
<line x1="20" y1="309.0" x2="30" y2="309.0" stroke="#e8e8e8" stroke-width="0.7"/>
<line x1="8" y1="311.59999999999997" x2="18" y2="311.59999999999997" stroke="#e8e8e8" stroke-width="0.7"/>
<line x1="20" y1="311.59999999999997" x2="27" y2="311.59999999999997" stroke="#e8e8e8" stroke-width="0.7"/>
<line x1="8" y1="314.2" x2="18" y2="314.2" stroke="#e8e8e8" stroke-width="0.7"/>
<line x1="20" y1="314.2" x2="32" y2="314.2" stroke="#e8e8e8" stroke-width="0.7"/>
<line x1="8" y1="316.79999999999995" x2="18" y2="316.79999999999995" stroke="#e8e8e8" stroke-width="0.7"/>
<line x1="20" y1="316.79999999999995" x2="29" y2="316.79999999999995" stroke="#e8e8e8" stroke-width="0.7"/>
<line x1="8" y1="319.4" x2="18" y2="319.4" stroke="#e8e8e8" stroke-width="0.7"/>
<line x1="20" y1="319.4" x2="26" y2="319.4" stroke="#e8e8e8" stroke-width="0.7"/>
<line x1="8" y1="322.0" x2="18" y2="322.0" stroke="#e8e8e8" stroke-width="0.7"/>
<line x1="20" y1="322.0" x2="31" y2="322.0" stroke="#e8e8e8" stroke-width="0.7"/>
<rect x="39.6" y="305.6" width="59.6" height="43.6" rx="1" fill="none" stroke="#555" stroke-width="0.7"/>
<rect x="100.2" y="305.6" width="5" height="20" fill="#ffffff" stroke="#444" stroke-width="0.6"/>
<rect x="100.6" y="327" width="4.4" height="11" fill="#333"/>
<rect x="100.4" y="339.4" width="4.8" height="9.6" fill="#e22c2c"/>
<line x1="43" y1="308.4" x2="43" y2="342.4" stroke="#444" stroke-width="0.6"/>
<line x1="65.4" y1="308.4" x2="65.4" y2="342.4" stroke="#444" stroke-width="0.6"/>
<line x1="71" y1="308.4" x2="71" y2="342.4" stroke="#444" stroke-width="0.6"/>
<line x1="94" y1="308.4" x2="94" y2="342.4" stroke="#444" stroke-width="0.6"/>
<line x1="43" y1="318.6" x2="65.4" y2="318.6" stroke="#e58a8a" stroke-width="0.9"/>
<line x1="43" y1="321" x2="65.4" y2="321" stroke="#e58a8a" stroke-width="0.9"/>
<line x1="43" y1="323.4" x2="65.4" y2="323.4" stroke="#e58a8a" stroke-width="0.9"/>
<line x1="43" y1="327.6" x2="65.4" y2="327.6" stroke="#e58a8a" stroke-width="0.9"/>
<line x1="43" y1="330.2" x2="65.4" y2="330.2" stroke="#e58a8a" stroke-width="0.9"/>
<line x1="43" y1="332.8" x2="65.4" y2="332.8" stroke="#e58a8a" stroke-width="0.9"/>
<line x1="43" y1="335.2" x2="65.4" y2="335.2" stroke="#e58a8a" stroke-width="0.9"/>
<line x1="71" y1="313" x2="94" y2="313" stroke="#e58a8a" stroke-width="0.9"/>
<line x1="71" y1="315.4" x2="94" y2="315.4" stroke="#e58a8a" stroke-width="0.9"/>
<line x1="71" y1="318.4" x2="94" y2="318.4" stroke="#e58a8a" stroke-width="0.9"/>
<line x1="71" y1="320.8" x2="94" y2="320.8" stroke="#e58a8a" stroke-width="0.9"/>
<line x1="71" y1="335" x2="94" y2="335" stroke="#e58a8a" stroke-width="0.9"/>
<line x1="71" y1="338" x2="94" y2="338" stroke="#e58a8a" stroke-width="0.9"/>
<line x1="71" y1="340.4" x2="94" y2="340.4" stroke="#e58a8a" stroke-width="0.9"/>
<rect x="44.300000000000004" y="317.4" width="2.6" height="3.4" fill="#2f74d8"/>
<rect x="47.1" y="317.4" width="2.6" height="3.4" fill="#2f74d8"/>
<rect x="54.1" y="316.4" width="2.6" height="3.4" fill="#2f74d8"/>
<rect x="62.300000000000004" y="318.79999999999995" width="2.6" height="3.4" fill="#2f74d8"/>
<rect x="44.300000000000004" y="327.4" width="2.6" height="3.4" fill="#2f74d8"/>
<rect x="44.300000000000004" y="331.4" width="2.6" height="3.4" fill="#2f74d8"/>
<rect x="47.7" y="329.4" width="2.6" height="3.4" fill="#2f74d8"/>
<rect x="50.7" y="329.4" width="2.6" height="3.4" fill="#2f74d8"/>
<rect x="59.1" y="327.0" width="2.6" height="3.4" fill="#2f74d8"/>
<rect x="62.300000000000004" y="329.4" width="2.6" height="3.4" fill="#2f74d8"/>
<rect x="62.300000000000004" y="333.4" width="2.6" height="3.4" fill="#2f74d8"/>
<rect x="62.7" y="318.4" width="2.6" height="3.4" fill="#2f74d8"/>
<rect x="73.7" y="311.79999999999995" width="2.6" height="3.4" fill="#2f74d8"/>
<rect x="73.7" y="317.4" width="2.6" height="3.4" fill="#2f74d8"/>
<rect x="79.7" y="311.79999999999995" width="2.6" height="3.4" fill="#2f74d8"/>
<rect x="79.7" y="317.4" width="2.6" height="3.4" fill="#2f74d8"/>
<rect x="92.3" y="312.4" width="2.6" height="3.4" fill="#2f74d8"/>
<rect x="92.3" y="318.0" width="2.6" height="3.4" fill="#2f74d8"/>
<rect x="75.7" y="334.4" width="2.6" height="3.4" fill="#2f74d8"/>
<rect x="82.7" y="333.4" width="2.6" height="3.4" fill="#2f74d8"/>
<rect x="92.3" y="335.4" width="2.6" height="3.4" fill="#2f74d8"/>
<rect x="92.3" y="338.4" width="2.6" height="3.4" fill="#2f74d8"/>
<rect x="41" y="309" width="0.8" height="0.8" fill="#666"/>
<rect x="68.6" y="309" width="0.8" height="0.8" fill="#666"/>
<rect x="41" y="312" width="0.8" height="0.8" fill="#666"/>
<rect x="68.6" y="312" width="0.8" height="0.8" fill="#666"/>
<rect x="41" y="315" width="0.8" height="0.8" fill="#666"/>
<rect x="68.6" y="315" width="0.8" height="0.8" fill="#666"/>
<rect x="41" y="318" width="0.8" height="0.8" fill="#666"/>
<rect x="68.6" y="318" width="0.8" height="0.8" fill="#666"/>
<rect x="41" y="321" width="0.8" height="0.8" fill="#666"/>
<rect x="68.6" y="321" width="0.8" height="0.8" fill="#666"/>
<rect x="41" y="324" width="0.8" height="0.8" fill="#666"/>
<rect x="68.6" y="324" width="0.8" height="0.8" fill="#666"/>
<rect x="41" y="327" width="0.8" height="0.8" fill="#666"/>
<rect x="68.6" y="327" width="0.8" height="0.8" fill="#666"/>
<rect x="41" y="330" width="0.8" height="0.8" fill="#666"/>
<rect x="68.6" y="330" width="0.8" height="0.8" fill="#666"/>
<rect x="41" y="333" width="0.8" height="0.8" fill="#666"/>
<rect x="68.6" y="333" width="0.8" height="0.8" fill="#666"/>
<rect x="41" y="336" width="0.8" height="0.8" fill="#666"/>
<rect x="68.6" y="336" width="0.8" height="0.8" fill="#666"/>
<rect x="41" y="339" width="0.8" height="0.8" fill="#666"/>
<rect x="68.6" y="339" width="0.8" height="0.8" fill="#666"/>
<rect x="41" y="342" width="0.8" height="0.8" fill="#666"/>
<rect x="68.6" y="342" width="0.8" height="0.8" fill="#666"/>
<rect x="125.4" y="382.2" width="12.4" height="21.8" fill="#3b4352"/>
<rect x="127.4" y="386" width="8.6" height="2.2" fill="#6b7382"/>
<path d="M129 391.8l4.4 4.4m0-4.4l-4.4 4.4" stroke="#f4f4f4" stroke-width="1.1"/>
<path d="M129.6 404l1-3.4 3 1.4" fill="none" stroke="#e6e9ee" stroke-width="0.8"/>
<rect x="125.6" y="79.5" width="641.4" height="1.2" fill="#eef2f7"/>
<text x="127.2" y="88.3" font-size="7" fill="#14171c" font-weight="normal" textLength="62.8" lengthAdjust="spacingAndGlyphs" stroke="#14171c" stroke-width="0.2">[−][Top][2D Wireframe]</text>
<line x1="127.2" y1="89.6" x2="190" y2="89.6" stroke="#9aa0a8" stroke-width="0.5" stroke-dasharray="1 1.6"/>
<rect x="160.3" y="90.2" width="391.8" height="286.6" rx="3.4" fill="none" stroke="#2b2b2b" stroke-width="1.4"/>
<rect x="556.4" y="90.6" width="33.4" height="19.0" rx="3" fill="#fff" stroke="#3a3a3a" stroke-width="1.05"/>
<rect x="556.4" y="112.9" width="33.4" height="110.5" rx="3" fill="#fff" stroke="#3a3a3a" stroke-width="1.05"/>
<rect x="556.4" y="226.2" width="33.4" height="75.0" rx="3" fill="#fff" stroke="#3a3a3a" stroke-width="1.05"/>
<rect x="556.4" y="304" width="33.4" height="73.0" rx="3" fill="#fff" stroke="#3a3a3a" stroke-width="1.05"/>
<text transform="translate(579.4,297.4) rotate(-90)" font-family='"Liberation Serif",serif' font-size="19.5" font-weight="bold" fill="#ffffff" stroke="#808080" stroke-width="0.65" textLength="65.5" lengthAdjust="spacingAndGlyphs">Autodesk</text>
<line x1="557.4" y1="309.5" x2="589.6" y2="309.5" stroke="#3a3a3a" stroke-width="0.55"/>
<line x1="557.4" y1="312.8" x2="589.6" y2="312.8" stroke="#3a3a3a" stroke-width="0.55"/>
<line x1="557.4" y1="316" x2="589.6" y2="316" stroke="#3a3a3a" stroke-width="0.55"/>
<line x1="557.4" y1="319.3" x2="589.6" y2="319.3" stroke="#3a3a3a" stroke-width="0.55"/>
<line x1="557.4" y1="321.6" x2="589.6" y2="321.6" stroke="#3a3a3a" stroke-width="0.55"/>
<line x1="560.7" y1="304.8" x2="560.7" y2="321.6" stroke="#3a3a3a" stroke-width="0.55"/>
<line x1="566.8" y1="304.8" x2="566.8" y2="321.6" stroke="#3a3a3a" stroke-width="0.55"/>
<line x1="585.4" y1="304.8" x2="585.4" y2="321.6" stroke="#3a3a3a" stroke-width="0.55"/>
<line x1="557.4" y1="322.6" x2="589.6" y2="322.6" stroke="#e23434" stroke-width="0.5"/>
<text x="557.4" y="324.4" font-size="2.2" fill="#e23434" font-weight="bold" textLength="7.2" lengthAdjust="spacingAndGlyphs" stroke="#e23434" stroke-width="0.15">DATE</text>
<text x="573.0" y="324.4" font-size="2.2" fill="#e23434" font-weight="bold" textLength="6.0" lengthAdjust="spacingAndGlyphs" stroke="#e23434" stroke-width="0.15">NAME</text>
<text x="585.0" y="324.4" font-size="2.2" fill="#e23434" font-weight="bold" textLength="4.4" lengthAdjust="spacingAndGlyphs" stroke="#e23434" stroke-width="0.15">REV</text>
<text x="562.5" y="334.5" font-size="2.8" fill="#e23434" font-weight="bold" textLength="18.5" lengthAdjust="spacingAndGlyphs" font-style="italic" stroke="#e23434" stroke-width="0.15">PRODUCTIVITY</text>
<text x="559.8" y="343.2" font-size="2.6" fill="#e23434" font-weight="bold" textLength="24.0" lengthAdjust="spacingAndGlyphs" font-style="italic" stroke="#e23434" stroke-width="0.15">PRODUCT DRAWING</text>
<line x1="557.4" y1="350" x2="589.6" y2="350" stroke="#555" stroke-width="0.5"/>
<line x1="557.4" y1="353.8" x2="589.6" y2="353.8" stroke="#555" stroke-width="0.5"/>
<line x1="557.4" y1="357" x2="589.6" y2="357" stroke="#555" stroke-width="0.5"/>
<line x1="557.4" y1="359.2" x2="589.6" y2="359.2" stroke="#e23434" stroke-width="0.5"/>
<line x1="557.4" y1="363.4" x2="589.6" y2="363.4" stroke="#e23434" stroke-width="0.5"/>
<line x1="557.4" y1="370.2" x2="589.6" y2="370.2" stroke="#e23434" stroke-width="0.5"/>
<line x1="573" y1="350" x2="573" y2="363.4" stroke="#555" stroke-width="0.5"/>
<text x="557.6" y="353.2" font-size="3.4" fill="#e23434" font-weight="bold" textLength="5.4" lengthAdjust="spacingAndGlyphs" stroke="#e23434" stroke-width="0.15">DR</text>
<text x="574.0" y="353.2" font-size="3.4" fill="#e23434" font-weight="bold" textLength="6.0" lengthAdjust="spacingAndGlyphs" stroke="#e23434" stroke-width="0.15">CK</text>
<rect x="559" y="355" width="4" height="1.6" fill="#e23434"/>
<rect x="575" y="355" width="4.6" height="1.6" fill="#e23434"/>
<text x="562.5" y="362.2" font-size="2.8" fill="#e23434" font-weight="bold" textLength="8.5" lengthAdjust="spacingAndGlyphs" stroke="#e23434" stroke-width="0.15">1:12</text>
<text x="575.5" y="362.2" font-size="2.8" fill="#e23434" font-weight="bold" textLength="10.5" lengthAdjust="spacingAndGlyphs" stroke="#e23434" stroke-width="0.15">03/01</text>
<text x="568.0" y="368.1" font-size="3" fill="#e23434" font-weight="bold" textLength="9.7" lengthAdjust="spacingAndGlyphs" font-style="italic" stroke="#e23434" stroke-width="0.15">0.214</text>
<text x="566.8" y="374.7" font-size="3" fill="#e23434" font-weight="bold" textLength="13.2" lengthAdjust="spacingAndGlyphs" font-style="italic" stroke="#e23434" stroke-width="0.15">4 OF 9</text>
<text x="556.8" y="370.2" font-size="1.8" fill="#e23434" font-weight="bold" textLength="3.2" lengthAdjust="spacingAndGlyphs" stroke="#e23434" stroke-width="0.15">NO</text>
<text x="556.8" y="349.4" font-size="1.8" fill="#e23434" font-weight="bold" textLength="3.2" lengthAdjust="spacingAndGlyphs" stroke="#e23434" stroke-width="0.15">BY</text>
<text transform="translate(554.9,363.6) rotate(-90)" font-size="2.2" font-weight="bold" fill="#e23434" stroke="#e23434" stroke-width="0.25" textLength="22">PRODUCTIVITY DEMO SET</text>
<text x="168.5" y="109.5" font-size="2.6" fill="#1c1c1c" font-weight="bold" textLength="4.8" lengthAdjust="spacingAndGlyphs">400</text>
<text x="168.5" y="122.4" font-size="2.6" fill="#1c1c1c" font-weight="bold" textLength="4.8" lengthAdjust="spacingAndGlyphs">401</text>
<text x="168.5" y="135.3" font-size="2.6" fill="#1c1c1c" font-weight="bold" textLength="4.8" lengthAdjust="spacingAndGlyphs">402</text>
<text x="168.5" y="148.1" font-size="2.6" fill="#1c1c1c" font-weight="bold" textLength="4.8" lengthAdjust="spacingAndGlyphs">403</text>
<text x="168.5" y="161.0" font-size="2.6" fill="#1c1c1c" font-weight="bold" textLength="4.8" lengthAdjust="spacingAndGlyphs">404</text>
<text x="168.5" y="173.8" font-size="2.6" fill="#1c1c1c" font-weight="bold" textLength="4.8" lengthAdjust="spacingAndGlyphs">405</text>
<text x="168.5" y="186.7" font-size="2.6" fill="#1c1c1c" font-weight="bold" textLength="4.8" lengthAdjust="spacingAndGlyphs">406</text>
<text x="168.5" y="199.6" font-size="2.6" fill="#1c1c1c" font-weight="bold" textLength="4.8" lengthAdjust="spacingAndGlyphs">407</text>
<text x="168.5" y="212.4" font-size="2.6" fill="#1c1c1c" font-weight="bold" textLength="4.8" lengthAdjust="spacingAndGlyphs">408</text>
<text x="168.5" y="225.3" font-size="2.6" fill="#1c1c1c" font-weight="bold" textLength="4.8" lengthAdjust="spacingAndGlyphs">409</text>
<text x="168.5" y="238.1" font-size="2.6" fill="#1c1c1c" font-weight="bold" textLength="4.8" lengthAdjust="spacingAndGlyphs">410</text>
<text x="168.5" y="251.0" font-size="2.6" fill="#1c1c1c" font-weight="bold" textLength="4.8" lengthAdjust="spacingAndGlyphs">411</text>
<text x="168.5" y="263.9" font-size="2.6" fill="#1c1c1c" font-weight="bold" textLength="4.8" lengthAdjust="spacingAndGlyphs">412</text>
<text x="168.5" y="276.7" font-size="2.6" fill="#1c1c1c" font-weight="bold" textLength="4.8" lengthAdjust="spacingAndGlyphs">413</text>
<text x="168.5" y="289.6" font-size="2.6" fill="#1c1c1c" font-weight="bold" textLength="4.8" lengthAdjust="spacingAndGlyphs">414</text>
<text x="168.5" y="302.4" font-size="2.6" fill="#1c1c1c" font-weight="bold" textLength="4.8" lengthAdjust="spacingAndGlyphs">415</text>
<text x="168.5" y="315.3" font-size="2.6" fill="#1c1c1c" font-weight="bold" textLength="4.8" lengthAdjust="spacingAndGlyphs">416</text>
<text x="168.5" y="328.2" font-size="2.6" fill="#1c1c1c" font-weight="bold" textLength="4.8" lengthAdjust="spacingAndGlyphs">417</text>
<line x1="185.2" y1="118.4" x2="185.2" y2="325.8" stroke="#707070" stroke-width="0.8"/>
<rect x="183.79999999999998" y="116.80000000000001" width="2.4" height="1.2" fill="#d6d84a"/>
<text x="186.0" y="119.7" font-size="2.8" fill="#111" font-weight="bold" textLength="5.0" lengthAdjust="spacingAndGlyphs" stroke="#111" stroke-width="0.15">TB1</text>
<line x1="326.6" y1="118.4" x2="326.6" y2="325.8" stroke="#707070" stroke-width="0.8"/>
<rect x="325.20000000000005" y="116.80000000000001" width="2.4" height="1.2" fill="#d6d84a"/>
<text x="327.4" y="119.7" font-size="2.8" fill="#111" font-weight="bold" textLength="5.0" lengthAdjust="spacingAndGlyphs" stroke="#111" stroke-width="0.15">TB1</text>
<text x="186.1" y="327.1" font-size="2.6" fill="#111" font-weight="bold" textLength="3.2" lengthAdjust="spacingAndGlyphs">L2</text>
<text x="327.5" y="327.1" font-size="2.6" fill="#111" font-weight="bold" textLength="3.2" lengthAdjust="spacingAndGlyphs">L2</text>
<line x1="185.2" y1="172.5" x2="213" y2="172.5" stroke="#707070" stroke-width="0.7"/>
<line x1="213" y1="172.5" x2="310" y2="172.5" stroke="#f3928e" stroke-width="1.3"/>
<line x1="310" y1="172.5" x2="326.6" y2="172.5" stroke="#707070" stroke-width="0.7"/>
<circle cx="185.2" cy="172.5" r="0.6" fill="#333"/>
<path d="M191.20000000000002 171.6a1.2 1.2 0 0 0 0 2.2l1.6 0z" fill="#444"/>
<line x1="192.6" y1="173.1" x2="194.4" y2="174.4" stroke="#555" stroke-width="0.6"/>
<text x="190.6" y="169.8" font-size="2.4" fill="#222" font-weight="bold" textLength="5.0" lengthAdjust="spacingAndGlyphs" stroke="#222" stroke-width="0.2">CR40</text>
<text x="193.6" y="175.7" font-size="2.4" fill="#2f8ae6" font-weight="bold" textLength="4.2" lengthAdjust="spacingAndGlyphs" stroke="#2f8ae6" stroke-width="0.3">4.07</text>
<text x="204.4" y="169.2" font-size="3.6" fill="#2f8ae6" font-weight="bold" textLength="9.0" lengthAdjust="spacingAndGlyphs" stroke="#2f8ae6" stroke-width="0.3">PB414</text>
<text x="204.0" y="171.7" font-size="3" fill="#2f8ae6" font-weight="bold" textLength="8.6" lengthAdjust="spacingAndGlyphs" stroke="#2f8ae6" stroke-width="0.3">4.14</text>
<path d="M206.70000000000002 172.7a2.8 2.8 0 0 0 5.6 0" fill="none" stroke="#222" stroke-width="0.9"/>
<text x="220.1" y="171.9" font-size="2.4" fill="#8fc43a" font-weight="bold" textLength="3.4" lengthAdjust="spacingAndGlyphs" stroke="#8fc43a" stroke-width="0.3">101</text>
<path d="M233.20000000000002 171.6a1.2 1.2 0 0 0 0 2.2l1.6 0z" fill="#444"/>
<line x1="234.6" y1="173.1" x2="236.4" y2="174.4" stroke="#555" stroke-width="0.6"/>
<text x="232.6" y="169.8" font-size="2.4" fill="#222" font-weight="bold" textLength="5.0" lengthAdjust="spacingAndGlyphs" stroke="#222" stroke-width="0.2">CR40</text>
<text x="235.6" y="175.7" font-size="2.4" fill="#2f8ae6" font-weight="bold" textLength="4.2" lengthAdjust="spacingAndGlyphs" stroke="#2f8ae6" stroke-width="0.3">4.07</text>
<path d="M259.5 172.8a2.5 2.5 0 0 1 5 0" fill="#fff" stroke="#222" stroke-width="0.9"/>
<text x="285.9" y="171.9" font-size="2.4" fill="#8fc43a" font-weight="bold" textLength="3.4" lengthAdjust="spacingAndGlyphs" stroke="#8fc43a" stroke-width="0.3">101</text>
<text x="310.0" y="168.7" font-size="2.8" fill="#2f8ae6" font-weight="bold" textLength="6.0" lengthAdjust="spacingAndGlyphs" stroke="#2f8ae6" stroke-width="0.3">LT40</text>
<line x1="310" y1="169.4" x2="316" y2="169.4" stroke="#2f8ae6" stroke-width="0.5"/>
<circle cx="313" cy="172.5" r="2.2" fill="#fff" stroke="#222" stroke-width="0.7"/>
<rect x="308.6" y="173.5" width="1" height="0.8" fill="#8fc43a"/>
<rect x="316.2" y="173.5" width="1" height="0.8" fill="#8fc43a"/>
<text x="328.6" y="172.6" font-size="3" fill="#2f8ae6" font-weight="bold" textLength="6.6" lengthAdjust="spacingAndGlyphs" stroke="#2f8ae6" stroke-width="0.3">LIGHT</text>
<text x="336.0" y="172.8" font-size="2" fill="#2f8ae6" font-weight="bold" textLength="4.6" lengthAdjust="spacingAndGlyphs" stroke="#2f8ae6" stroke-width="0.3">4.05</text>
<rect x="328.40000000000003" y="175.7" width="1.3" height="1.5" fill="#111"/>
<text x="330.2" y="177.7" font-size="2.8" fill="#111" font-weight="bold" textLength="5.8" lengthAdjust="spacingAndGlyphs" stroke="#111" stroke-width="0.12">MOTOR</text>
<line x1="185.2" y1="185.36" x2="213" y2="185.36" stroke="#707070" stroke-width="0.7"/>
<line x1="213" y1="185.36" x2="310" y2="185.36" stroke="#f3928e" stroke-width="1.3"/>
<line x1="310" y1="185.36" x2="326.6" y2="185.36" stroke="#707070" stroke-width="0.7"/>
<circle cx="185.2" cy="185.36" r="0.6" fill="#333"/>
<path d="M191.20000000000002 184.46a1.2 1.2 0 0 0 0 2.2l1.6 0z" fill="#444"/>
<line x1="192.6" y1="185.96" x2="194.4" y2="187.26000000000002" stroke="#555" stroke-width="0.6"/>
<text x="190.6" y="182.6" font-size="2.4" fill="#222" font-weight="bold" textLength="5.0" lengthAdjust="spacingAndGlyphs" stroke="#222" stroke-width="0.2">CR40</text>
<text x="193.6" y="188.5" font-size="2.4" fill="#2f8ae6" font-weight="bold" textLength="4.2" lengthAdjust="spacingAndGlyphs" stroke="#2f8ae6" stroke-width="0.3">4.07</text>
<text x="204.4" y="182.1" font-size="3.6" fill="#2f8ae6" font-weight="bold" textLength="9.0" lengthAdjust="spacingAndGlyphs" stroke="#2f8ae6" stroke-width="0.3">PB414</text>
<text x="204.0" y="184.5" font-size="3" fill="#2f8ae6" font-weight="bold" textLength="8.6" lengthAdjust="spacingAndGlyphs" stroke="#2f8ae6" stroke-width="0.3">4.14</text>
<path d="M206.70000000000002 185.56a2.8 2.8 0 0 0 5.6 0" fill="none" stroke="#222" stroke-width="0.9"/>
<text x="220.1" y="184.7" font-size="2.4" fill="#8fc43a" font-weight="bold" textLength="3.4" lengthAdjust="spacingAndGlyphs" stroke="#8fc43a" stroke-width="0.3">101</text>
<path d="M233.20000000000002 184.46a1.2 1.2 0 0 0 0 2.2l1.6 0z" fill="#444"/>
<line x1="234.6" y1="185.96" x2="236.4" y2="187.26000000000002" stroke="#555" stroke-width="0.6"/>
<text x="232.6" y="182.6" font-size="2.4" fill="#222" font-weight="bold" textLength="5.0" lengthAdjust="spacingAndGlyphs" stroke="#222" stroke-width="0.2">CR40</text>
<text x="235.6" y="188.5" font-size="2.4" fill="#2f8ae6" font-weight="bold" textLength="4.2" lengthAdjust="spacingAndGlyphs" stroke="#2f8ae6" stroke-width="0.3">4.07</text>
<path d="M259.5 185.66000000000003a2.5 2.5 0 0 1 5 0" fill="#fff" stroke="#222" stroke-width="0.9"/>
<text x="285.9" y="184.7" font-size="2.4" fill="#8fc43a" font-weight="bold" textLength="3.4" lengthAdjust="spacingAndGlyphs" stroke="#8fc43a" stroke-width="0.3">101</text>
<text x="310.0" y="181.6" font-size="2.8" fill="#2f8ae6" font-weight="bold" textLength="6.0" lengthAdjust="spacingAndGlyphs" stroke="#2f8ae6" stroke-width="0.3">LT40</text>
<line x1="310" y1="182.26000000000002" x2="316" y2="182.26000000000002" stroke="#2f8ae6" stroke-width="0.5"/>
<circle cx="313" cy="185.36" r="2.2" fill="#fff" stroke="#222" stroke-width="0.7"/>
<rect x="308.6" y="186.36" width="1" height="0.8" fill="#8fc43a"/>
<rect x="316.2" y="186.36" width="1" height="0.8" fill="#8fc43a"/>
<text x="328.6" y="185.4" font-size="3" fill="#2f8ae6" font-weight="bold" textLength="6.6" lengthAdjust="spacingAndGlyphs" stroke="#2f8ae6" stroke-width="0.3">LIGHT</text>
<text x="336.0" y="185.7" font-size="2" fill="#2f8ae6" font-weight="bold" textLength="4.6" lengthAdjust="spacingAndGlyphs" stroke="#2f8ae6" stroke-width="0.3">4.05</text>
<rect x="328.40000000000003" y="188.56" width="1.3" height="1.5" fill="#111"/>
<text x="330.2" y="190.6" font-size="2.8" fill="#111" font-weight="bold" textLength="10.4" lengthAdjust="spacingAndGlyphs" stroke="#111" stroke-width="0.12">RUN LIGHT</text>
<line x1="185.2" y1="198.22" x2="213" y2="198.22" stroke="#707070" stroke-width="0.7"/>
<line x1="213" y1="198.22" x2="310" y2="198.22" stroke="#f3928e" stroke-width="1.3"/>
<line x1="310" y1="198.22" x2="326.6" y2="198.22" stroke="#707070" stroke-width="0.7"/>
<circle cx="185.2" cy="198.22" r="0.6" fill="#333"/>
<path d="M191.20000000000002 197.32a1.2 1.2 0 0 0 0 2.2l1.6 0z" fill="#444"/>
<line x1="192.6" y1="198.82" x2="194.4" y2="200.12" stroke="#555" stroke-width="0.6"/>
<text x="190.6" y="195.5" font-size="2.4" fill="#222" font-weight="bold" textLength="5.0" lengthAdjust="spacingAndGlyphs" stroke="#222" stroke-width="0.2">CR40</text>
<text x="193.6" y="201.4" font-size="2.4" fill="#2f8ae6" font-weight="bold" textLength="4.2" lengthAdjust="spacingAndGlyphs" stroke="#2f8ae6" stroke-width="0.3">4.07</text>
<text x="204.4" y="194.9" font-size="3.6" fill="#2f8ae6" font-weight="bold" textLength="9.0" lengthAdjust="spacingAndGlyphs" stroke="#2f8ae6" stroke-width="0.3">PB414</text>
<text x="204.0" y="197.4" font-size="3" fill="#2f8ae6" font-weight="bold" textLength="8.6" lengthAdjust="spacingAndGlyphs" stroke="#2f8ae6" stroke-width="0.3">4.14</text>
<path d="M206.70000000000002 198.42a2.8 2.8 0 0 0 5.6 0" fill="none" stroke="#222" stroke-width="0.9"/>
<text x="220.1" y="197.6" font-size="2.4" fill="#8fc43a" font-weight="bold" textLength="3.4" lengthAdjust="spacingAndGlyphs" stroke="#8fc43a" stroke-width="0.3">101</text>
<path d="M233.20000000000002 197.32a1.2 1.2 0 0 0 0 2.2l1.6 0z" fill="#444"/>
<line x1="234.6" y1="198.82" x2="236.4" y2="200.12" stroke="#555" stroke-width="0.6"/>
<text x="232.6" y="195.5" font-size="2.4" fill="#222" font-weight="bold" textLength="5.0" lengthAdjust="spacingAndGlyphs" stroke="#222" stroke-width="0.2">CR40</text>
<text x="235.6" y="201.4" font-size="2.4" fill="#2f8ae6" font-weight="bold" textLength="4.2" lengthAdjust="spacingAndGlyphs" stroke="#2f8ae6" stroke-width="0.3">4.07</text>
<path d="M259.5 198.52a2.5 2.5 0 0 1 5 0" fill="#fff" stroke="#222" stroke-width="0.9"/>
<text x="285.9" y="197.6" font-size="2.4" fill="#8fc43a" font-weight="bold" textLength="3.4" lengthAdjust="spacingAndGlyphs" stroke="#8fc43a" stroke-width="0.3">101</text>
<text x="310.0" y="194.4" font-size="2.8" fill="#2f8ae6" font-weight="bold" textLength="6.0" lengthAdjust="spacingAndGlyphs" stroke="#2f8ae6" stroke-width="0.3">LT40</text>
<line x1="310" y1="195.12" x2="316" y2="195.12" stroke="#2f8ae6" stroke-width="0.5"/>
<circle cx="313" cy="198.22" r="2.2" fill="#fff" stroke="#222" stroke-width="0.7"/>
<rect x="308.6" y="199.22" width="1" height="0.8" fill="#8fc43a"/>
<rect x="316.2" y="199.22" width="1" height="0.8" fill="#8fc43a"/>
<text x="328.6" y="198.3" font-size="3" fill="#2f8ae6" font-weight="bold" textLength="6.6" lengthAdjust="spacingAndGlyphs" stroke="#2f8ae6" stroke-width="0.3">LIGHT</text>
<text x="336.0" y="198.5" font-size="2" fill="#2f8ae6" font-weight="bold" textLength="4.6" lengthAdjust="spacingAndGlyphs" stroke="#2f8ae6" stroke-width="0.3">4.05</text>
<line x1="262" y1="175.1" x2="262" y2="195.62" stroke="#555" stroke-width="0.5" stroke-dasharray="1.4 1.2"/>
<text transform="translate(330.4,206.22) rotate(-90)" font-size="2.6" font-weight="bold" fill="#111" stroke="#111" stroke-width="0.3" textLength="5">STOP</text>
<rect x="328.6" y="178.5" width="1.4" height="1.2" fill="#111"/>
<text x="258.4" y="164.6" font-size="3" fill="#2f8ae6" font-weight="bold" textLength="7.2" lengthAdjust="spacingAndGlyphs" stroke="#2f8ae6" stroke-width="0.3">SS406</text>
<text x="259.0" y="167.2" font-size="2.6" fill="#2f8ae6" font-weight="bold" textLength="6.0" lengthAdjust="spacingAndGlyphs" stroke="#2f8ae6" stroke-width="0.3">4.06</text>
<path d="M259.4 167.9l2.6-2.2 2.6 2.2z" fill="#2f8ae6"/>
<line x1="257.6" y1="169.5" x2="272" y2="169.5" stroke="#cbd23c" stroke-width="0.9"/>
<line x1="297.4" y1="198.22" x2="297.4" y2="211.07999999999998" stroke="#e05a5a" stroke-width="0.9"/>
<line x1="297.4" y1="211.07999999999998" x2="310" y2="211.07999999999998" stroke="#f3928e" stroke-width="1.1"/>
<line x1="310" y1="211.07999999999998" x2="326.6" y2="211.07999999999998" stroke="#707070" stroke-width="0.7"/>
<circle cx="297.4" cy="198.22" r="0.7" fill="#333"/>
<text x="310.0" y="207.5" font-size="2.8" fill="#2f8ae6" font-weight="bold" textLength="6.0" lengthAdjust="spacingAndGlyphs" stroke="#2f8ae6" stroke-width="0.3">M414</text>
<rect x="310.6" y="208.48" width="4.8" height="3.4" fill="#d9ebfb" stroke="#2f8ae6" stroke-width="0.5"/>
<path d="M310.4 211.98h5.2M310.4 213.98h5.2M310.8 211.98l4.4 2m0-2l-4.4 2" stroke="#222" stroke-width="0.7" fill="none"/>
<text x="328.6" y="211.0" font-size="2.6" fill="#2f8ae6" font-weight="bold" textLength="6.0" lengthAdjust="spacingAndGlyphs" stroke="#2f8ae6" stroke-width="0.3">SOL408</text>
<text x="328.6" y="213.3" font-size="2.2" fill="#2f8ae6" font-weight="bold" textLength="4.4" lengthAdjust="spacingAndGlyphs" stroke="#2f8ae6" stroke-width="0.3">4.08</text>
<rect x="182" y="222.94" width="3.4" height="1.6" fill="#c9e27a"/>
<rect x="321.6" y="222.94" width="3.4" height="1.6" fill="#c9e27a"/>
<line x1="185.2" y1="236.8" x2="205" y2="236.8" stroke="#707070" stroke-width="0.7"/>
<line x1="205" y1="236.8" x2="308" y2="236.8" stroke="#f3928e" stroke-width="1.3"/>
<line x1="308" y1="236.8" x2="326.6" y2="236.8" stroke="#707070" stroke-width="0.7"/>
<circle cx="185.2" cy="236.8" r="0.6" fill="#333"/>
<text x="197.0" y="234.5" font-size="2.6" fill="#2f8ae6" font-weight="bold" textLength="7.6" lengthAdjust="spacingAndGlyphs" stroke="#2f8ae6" stroke-width="0.3">LS410</text>
<line x1="197" y1="235.20000000000002" x2="204.6" y2="235.20000000000002" stroke="#2f8ae6" stroke-width="0.5"/>
<path d="M196.8 241.10000000000002h2.4l1.6-2.6 1.6 2.6h2.4M199.4 241.10000000000002v-1.2h2.8v1.2" fill="#222" stroke="#222" stroke-width="0.9"/>
<text x="219.6" y="235.1" font-size="2.6" fill="#2f8ae6" font-weight="bold" textLength="6.8" lengthAdjust="spacingAndGlyphs" stroke="#2f8ae6" stroke-width="0.3">CR410</text>
<path d="M220.6 236.8a2.4 2.4 0 0 0 4.8 0" fill="#fff" stroke="#333" stroke-width="0.7"/>
<text x="210.1" y="236.2" font-size="2.4" fill="#8fc43a" font-weight="bold" textLength="3.4" lengthAdjust="spacingAndGlyphs" stroke="#8fc43a" stroke-width="0.3">101</text>
<text x="256.3" y="236.2" font-size="2.4" fill="#8fc43a" font-weight="bold" textLength="3.4" lengthAdjust="spacingAndGlyphs" stroke="#8fc43a" stroke-width="0.3">101</text>
<path d="M291.8 235.9a1.2 1.2 0 0 0 0 2.2l1.6 0z" fill="#444"/>
<line x1="293.2" y1="237.4" x2="295" y2="238.70000000000002" stroke="#555" stroke-width="0.6"/>
<text x="291.2" y="234.1" font-size="2.4" fill="#222" font-weight="bold" textLength="5.0" lengthAdjust="spacingAndGlyphs" stroke="#222" stroke-width="0.2">CR41</text>
<text x="294.2" y="240.0" font-size="2.4" fill="#2f8ae6" font-weight="bold" textLength="4.2" lengthAdjust="spacingAndGlyphs" stroke="#2f8ae6" stroke-width="0.3">4.10</text>
<text x="310.0" y="233.2" font-size="2.8" fill="#2f8ae6" font-weight="bold" textLength="6.0" lengthAdjust="spacingAndGlyphs" stroke="#2f8ae6" stroke-width="0.3">M414</text>
<rect x="310.6" y="234.20000000000002" width="4.8" height="3.4" fill="#d9ebfb" stroke="#2f8ae6" stroke-width="0.5"/>
<path d="M310.4 237.70000000000002h5.2M310.4 239.70000000000002h5.2M310.8 237.70000000000002l4.4 2m0-2l-4.4 2" stroke="#222" stroke-width="0.7" fill="none"/>
<text x="328.6" y="236.2" font-size="2.8" fill="#2f8ae6" font-weight="bold" textLength="6.4" lengthAdjust="spacingAndGlyphs" stroke="#2f8ae6" stroke-width="0.3">SOL4</text>
<text x="335.6" y="235.2" font-size="1.8" fill="#2f8ae6" font-weight="bold" textLength="2.0" lengthAdjust="spacingAndGlyphs" stroke="#2f8ae6" stroke-width="0.3">10</text>
<text x="328.6" y="238.6" font-size="2.4" fill="#2f8ae6" font-weight="bold" textLength="5.4" lengthAdjust="spacingAndGlyphs" stroke="#2f8ae6" stroke-width="0.3">4.10</text>
<line x1="185.2" y1="249.65999999999997" x2="205" y2="249.65999999999997" stroke="#707070" stroke-width="0.7"/>
<line x1="205" y1="249.65999999999997" x2="308" y2="249.65999999999997" stroke="#f3928e" stroke-width="1.3"/>
<line x1="308" y1="249.65999999999997" x2="326.6" y2="249.65999999999997" stroke="#707070" stroke-width="0.7"/>
<circle cx="185.2" cy="249.65999999999997" r="0.6" fill="#333"/>
<text x="197.0" y="247.4" font-size="2.6" fill="#2f8ae6" font-weight="bold" textLength="7.6" lengthAdjust="spacingAndGlyphs" stroke="#2f8ae6" stroke-width="0.3">LS411</text>
<line x1="197" y1="248.05999999999997" x2="204.6" y2="248.05999999999997" stroke="#2f8ae6" stroke-width="0.5"/>
<path d="M196.8 253.95999999999998h2.4l1.6-2.6 1.6 2.6h2.4M199.4 253.95999999999998v-1.2h2.8v1.2" fill="#222" stroke="#222" stroke-width="0.9"/>
<text x="219.6" y="248.0" font-size="2.6" fill="#2f8ae6" font-weight="bold" textLength="6.8" lengthAdjust="spacingAndGlyphs" stroke="#2f8ae6" stroke-width="0.3">CR411</text>
<path d="M220.6 249.65999999999997a2.4 2.4 0 0 0 4.8 0" fill="#fff" stroke="#333" stroke-width="0.7"/>
<text x="210.1" y="249.0" font-size="2.4" fill="#8fc43a" font-weight="bold" textLength="3.4" lengthAdjust="spacingAndGlyphs" stroke="#8fc43a" stroke-width="0.3">101</text>
<text x="256.3" y="249.0" font-size="2.4" fill="#8fc43a" font-weight="bold" textLength="3.4" lengthAdjust="spacingAndGlyphs" stroke="#8fc43a" stroke-width="0.3">101</text>
<path d="M291.8 248.75999999999996a1.2 1.2 0 0 0 0 2.2l1.6 0z" fill="#444"/>
<line x1="293.2" y1="250.25999999999996" x2="295" y2="251.55999999999997" stroke="#555" stroke-width="0.6"/>
<text x="291.2" y="246.9" font-size="2.4" fill="#222" font-weight="bold" textLength="5.0" lengthAdjust="spacingAndGlyphs" stroke="#222" stroke-width="0.2">CR41</text>
<text x="294.2" y="252.8" font-size="2.4" fill="#2f8ae6" font-weight="bold" textLength="4.2" lengthAdjust="spacingAndGlyphs" stroke="#2f8ae6" stroke-width="0.3">4.11</text>
<text x="310.0" y="246.1" font-size="2.8" fill="#2f8ae6" font-weight="bold" textLength="6.0" lengthAdjust="spacingAndGlyphs" stroke="#2f8ae6" stroke-width="0.3">M414</text>
<rect x="310.6" y="247.05999999999997" width="4.8" height="3.4" fill="#d9ebfb" stroke="#2f8ae6" stroke-width="0.5"/>
<path d="M310.4 250.55999999999997h5.2M310.4 252.55999999999997h5.2M310.8 250.55999999999997l4.4 2m0-2l-4.4 2" stroke="#222" stroke-width="0.7" fill="none"/>
<text x="328.6" y="249.1" font-size="2.8" fill="#2f8ae6" font-weight="bold" textLength="6.4" lengthAdjust="spacingAndGlyphs" stroke="#2f8ae6" stroke-width="0.3">SOL4</text>
<text x="335.6" y="248.1" font-size="1.8" fill="#2f8ae6" font-weight="bold" textLength="2.0" lengthAdjust="spacingAndGlyphs" stroke="#2f8ae6" stroke-width="0.3">11</text>
<text x="328.6" y="251.4" font-size="2.4" fill="#2f8ae6" font-weight="bold" textLength="5.4" lengthAdjust="spacingAndGlyphs" stroke="#2f8ae6" stroke-width="0.3">4.11</text>
<line x1="185.2" y1="262.52" x2="205" y2="262.52" stroke="#707070" stroke-width="0.7"/>
<line x1="205" y1="262.52" x2="308" y2="262.52" stroke="#f3928e" stroke-width="1.3"/>
<line x1="308" y1="262.52" x2="326.6" y2="262.52" stroke="#707070" stroke-width="0.7"/>
<circle cx="185.2" cy="262.52" r="0.6" fill="#333"/>
<text x="243.3" y="261.9" font-size="2.4" fill="#8fc43a" font-weight="bold" textLength="3.4" lengthAdjust="spacingAndGlyphs" stroke="#8fc43a" stroke-width="0.3">101</text>
<text x="198.6" y="261.2" font-size="2.4" fill="#2f8ae6" font-weight="bold" textLength="4.8" lengthAdjust="spacingAndGlyphs" stroke="#2f8ae6" stroke-width="0.3">412</text>
<rect x="199.6" y="263.12" width="2.6" height="1.2" fill="#222"/>
<path d="M291.8 261.62a1.2 1.2 0 0 0 0 2.2l1.6 0z" fill="#444"/>
<line x1="293.2" y1="263.12" x2="295" y2="264.41999999999996" stroke="#555" stroke-width="0.6"/>
<text x="291.2" y="259.8" font-size="2.4" fill="#222" font-weight="bold" textLength="5.0" lengthAdjust="spacingAndGlyphs" stroke="#222" stroke-width="0.2">CR41</text>
<text x="294.2" y="265.7" font-size="2.4" fill="#2f8ae6" font-weight="bold" textLength="4.2" lengthAdjust="spacingAndGlyphs" stroke="#2f8ae6" stroke-width="0.3">4.12</text>
<text x="310.0" y="258.9" font-size="2.8" fill="#2f8ae6" font-weight="bold" textLength="6.0" lengthAdjust="spacingAndGlyphs" stroke="#2f8ae6" stroke-width="0.3">M414</text>
<rect x="310.6" y="259.91999999999996" width="4.8" height="3.4" fill="#d9ebfb" stroke="#2f8ae6" stroke-width="0.5"/>
<path d="M310.4 263.41999999999996h5.2M310.4 265.41999999999996h5.2M310.8 263.41999999999996l4.4 2m0-2l-4.4 2" stroke="#222" stroke-width="0.7" fill="none"/>
<text x="328.6" y="261.9" font-size="2.8" fill="#2f8ae6" font-weight="bold" textLength="6.4" lengthAdjust="spacingAndGlyphs" stroke="#2f8ae6" stroke-width="0.3">SOL4</text>
<text x="335.6" y="261.0" font-size="1.8" fill="#2f8ae6" font-weight="bold" textLength="2.0" lengthAdjust="spacingAndGlyphs" stroke="#2f8ae6" stroke-width="0.3">12</text>
<text x="328.6" y="264.3" font-size="2.4" fill="#2f8ae6" font-weight="bold" textLength="5.4" lengthAdjust="spacingAndGlyphs" stroke="#2f8ae6" stroke-width="0.3">4.12</text>
<line x1="185.2" y1="275.38" x2="205" y2="275.38" stroke="#707070" stroke-width="0.7"/>
<line x1="205" y1="275.38" x2="307" y2="275.38" stroke="#f3928e" stroke-width="1.3"/>
<line x1="307" y1="275.38" x2="326.6" y2="275.38" stroke="#707070" stroke-width="0.7"/>
<circle cx="185.2" cy="275.38" r="0.6" fill="#333"/>
<text x="196.0" y="268.3" font-size="2.6" fill="#2f8ae6" font-weight="bold" textLength="9.6" lengthAdjust="spacingAndGlyphs" stroke="#2f8ae6" stroke-width="0.3">PB413A</text>
<text x="198.0" y="270.6" font-size="2.4" fill="#2f8ae6" font-weight="bold" textLength="6.0" lengthAdjust="spacingAndGlyphs" stroke="#2f8ae6" stroke-width="0.3">4.13</text>
<text x="198.6" y="272.8" font-size="2.2" fill="#2f8ae6" font-weight="bold" textLength="4.8" lengthAdjust="spacingAndGlyphs" stroke="#2f8ae6" stroke-width="0.3">N.O.</text>
<path d="M198.4 275.38a2.4 2.4 0 0 1 4.8 0" fill="#fff" stroke="#222" stroke-width="0.7"/>
<text x="257.0" y="269.3" font-size="2.6" fill="#2f8ae6" font-weight="bold" textLength="10.0" lengthAdjust="spacingAndGlyphs" stroke="#2f8ae6" stroke-width="0.3">CR413B</text>
<text x="258.6" y="271.4" font-size="2.4" fill="#2f8ae6" font-weight="bold" textLength="6.8" lengthAdjust="spacingAndGlyphs" stroke="#2f8ae6" stroke-width="0.3">4.13</text>
<text x="259.4" y="273.6" font-size="2.2" fill="#2f8ae6" font-weight="bold" textLength="5.2" lengthAdjust="spacingAndGlyphs" stroke="#2f8ae6" stroke-width="0.3">4.14</text>
<line x1="258.4" y1="275.58" x2="265.6" y2="275.58" stroke="#333" stroke-width="0.8"/>
<text x="229.3" y="274.7" font-size="2.4" fill="#8fc43a" font-weight="bold" textLength="3.4" lengthAdjust="spacingAndGlyphs" stroke="#8fc43a" stroke-width="0.3">413</text>
<text x="282.3" y="274.7" font-size="2.4" fill="#8fc43a" font-weight="bold" textLength="3.4" lengthAdjust="spacingAndGlyphs" stroke="#8fc43a" stroke-width="0.3">413A</text>
<circle cx="313" cy="275.38" r="2.2" fill="#fff" stroke="#222" stroke-width="0.7"/>
<text x="310.0" y="271.8" font-size="2.8" fill="#2f8ae6" font-weight="bold" textLength="6.0" lengthAdjust="spacingAndGlyphs" stroke="#2f8ae6" stroke-width="0.3">LT41</text>
<line x1="220.4" y1="275.38" x2="220.4" y2="288.24" stroke="#e05a5a" stroke-width="0.9"/>
<line x1="205" y1="288.24" x2="220.4" y2="288.24" stroke="#f3928e" stroke-width="1.1"/>
<line x1="185.2" y1="288.24" x2="205" y2="288.24" stroke="#707070" stroke-width="0.7"/>
<circle cx="220.4" cy="275.38" r="0.7" fill="#333"/><circle cx="185.2" cy="288.24" r="0.6" fill="#333"/>
<text x="197.6" y="285.6" font-size="2.6" fill="#2f8ae6" font-weight="bold" textLength="6.8" lengthAdjust="spacingAndGlyphs" stroke="#2f8ae6" stroke-width="0.3">PB414</text>
<text x="198.4" y="287.6" font-size="2.2" fill="#2f8ae6" font-weight="bold" textLength="5.2" lengthAdjust="spacingAndGlyphs" stroke="#2f8ae6" stroke-width="0.3">4.14</text>
<line x1="198" y1="288.84000000000003" x2="204" y2="288.84000000000003" stroke="#333" stroke-width="0.7"/>
<line x1="293.3" y1="275.38" x2="293.3" y2="288.24" stroke="#d83c3c" stroke-width="1.1"/>
<line x1="293.3" y1="288.24" x2="308" y2="288.24" stroke="#f3928e" stroke-width="1.1"/>
<line x1="308" y1="288.24" x2="326.6" y2="288.24" stroke="#707070" stroke-width="0.7"/>
<circle cx="293.3" cy="275.38" r="0.8" fill="#333"/>
<text x="310.0" y="284.6" font-size="2.8" fill="#2f8ae6" font-weight="bold" textLength="6.0" lengthAdjust="spacingAndGlyphs" stroke="#2f8ae6" stroke-width="0.3">M414</text>
<rect x="310.6" y="285.64" width="4.8" height="3.4" fill="#d9ebfb" stroke="#2f8ae6" stroke-width="0.5"/>
<path d="M310.4 289.14h5.2M310.4 291.14h5.2M310.8 289.14l4.4 2m0-2l-4.4 2" stroke="#222" stroke-width="0.7" fill="none"/>
<text x="328.6" y="274.6" font-size="2.8" fill="#2f8ae6" font-weight="bold" textLength="11.4" lengthAdjust="spacingAndGlyphs" stroke="#2f8ae6" stroke-width="0.3">CONVEYOR</text>
<text x="328.6" y="277.0" font-size="2.4" fill="#2f8ae6" font-weight="bold" textLength="6.4" lengthAdjust="spacingAndGlyphs" stroke="#2f8ae6" stroke-width="0.3">4.13</text>
<rect x="328.4" y="279.58" width="1.4" height="1.6" fill="#111"/>
<text x="330.4" y="281.4" font-size="2.8" fill="#111" font-weight="bold" textLength="16.6" lengthAdjust="spacingAndGlyphs" stroke="#111" stroke-width="0.12">SYSTEM RUN</text>
<text x="328.6" y="287.4" font-size="2.8" fill="#2f8ae6" font-weight="bold" textLength="11.4" lengthAdjust="spacingAndGlyphs" stroke="#2f8ae6" stroke-width="0.3">CONVEYOR</text>
<text x="328.6" y="290.0" font-size="2.6" fill="#2f8ae6" font-weight="bold" textLength="8.4" lengthAdjust="spacingAndGlyphs" stroke="#2f8ae6" stroke-width="0.3">HORN</text>
<text x="363.0" y="109.5" font-size="2.6" fill="#1c1c1c" font-weight="bold" textLength="4.8" lengthAdjust="spacingAndGlyphs">418</text>
<text x="363.0" y="122.4" font-size="2.6" fill="#1c1c1c" font-weight="bold" textLength="4.8" lengthAdjust="spacingAndGlyphs">419</text>
<text x="363.0" y="135.3" font-size="2.6" fill="#1c1c1c" font-weight="bold" textLength="4.8" lengthAdjust="spacingAndGlyphs">420</text>
<text x="363.0" y="148.1" font-size="2.6" fill="#1c1c1c" font-weight="bold" textLength="4.8" lengthAdjust="spacingAndGlyphs">421</text>
<text x="363.0" y="161.0" font-size="2.6" fill="#1c1c1c" font-weight="bold" textLength="4.8" lengthAdjust="spacingAndGlyphs">422</text>
<text x="363.0" y="173.8" font-size="2.6" fill="#1c1c1c" font-weight="bold" textLength="4.8" lengthAdjust="spacingAndGlyphs">423</text>
<text x="363.0" y="186.7" font-size="2.6" fill="#1c1c1c" font-weight="bold" textLength="4.8" lengthAdjust="spacingAndGlyphs">424</text>
<text x="363.0" y="199.6" font-size="2.6" fill="#1c1c1c" font-weight="bold" textLength="4.8" lengthAdjust="spacingAndGlyphs">425</text>
<text x="363.0" y="212.4" font-size="2.6" fill="#1c1c1c" font-weight="bold" textLength="4.8" lengthAdjust="spacingAndGlyphs">426</text>
<text x="363.0" y="225.3" font-size="2.6" fill="#1c1c1c" font-weight="bold" textLength="4.8" lengthAdjust="spacingAndGlyphs">427</text>
<text x="363.0" y="238.1" font-size="2.6" fill="#1c1c1c" font-weight="bold" textLength="4.8" lengthAdjust="spacingAndGlyphs">428</text>
<text x="363.0" y="251.0" font-size="2.6" fill="#1c1c1c" font-weight="bold" textLength="4.8" lengthAdjust="spacingAndGlyphs">429</text>
<text x="363.0" y="263.9" font-size="2.6" fill="#1c1c1c" font-weight="bold" textLength="4.8" lengthAdjust="spacingAndGlyphs">430</text>
<text x="363.0" y="276.7" font-size="2.6" fill="#1c1c1c" font-weight="bold" textLength="4.8" lengthAdjust="spacingAndGlyphs">431</text>
<text x="363.0" y="289.6" font-size="2.6" fill="#1c1c1c" font-weight="bold" textLength="4.8" lengthAdjust="spacingAndGlyphs">432</text>
<text x="363.0" y="302.4" font-size="2.6" fill="#1c1c1c" font-weight="bold" textLength="4.8" lengthAdjust="spacingAndGlyphs">433</text>
<text x="363.0" y="315.3" font-size="2.6" fill="#1c1c1c" font-weight="bold" textLength="4.8" lengthAdjust="spacingAndGlyphs">434</text>
<text x="363.0" y="328.2" font-size="2.6" fill="#1c1c1c" font-weight="bold" textLength="4.8" lengthAdjust="spacingAndGlyphs">435</text>
<line x1="380.4" y1="117.2" x2="380.4" y2="325.8" stroke="#707070" stroke-width="0.8"/>
<rect x="379.0" y="115.60000000000001" width="2.4" height="1.2" fill="#d6d84a"/>
<text x="381.2" y="118.5" font-size="2.8" fill="#111" font-weight="bold" textLength="5.0" lengthAdjust="spacingAndGlyphs" stroke="#111" stroke-width="0.15">TB1</text>
<line x1="510.6" y1="117.2" x2="510.6" y2="325.8" stroke="#707070" stroke-width="0.8"/>
<rect x="509.20000000000005" y="115.60000000000001" width="2.4" height="1.2" fill="#d6d84a"/>
<text x="511.4" y="118.5" font-size="2.8" fill="#111" font-weight="bold" textLength="5.0" lengthAdjust="spacingAndGlyphs" stroke="#111" stroke-width="0.15">TB1</text>
<text x="381.3" y="327.1" font-size="2.6" fill="#111" font-weight="bold" textLength="3.2" lengthAdjust="spacingAndGlyphs">L2</text>
<text x="511.5" y="327.1" font-size="2.6" fill="#111" font-weight="bold" textLength="3.2" lengthAdjust="spacingAndGlyphs">L2</text>
<line x1="380.4" y1="147.1" x2="400.8" y2="147.1" stroke="#707070" stroke-width="0.7"/>
<line x1="400.8" y1="147.1" x2="495.4" y2="147.1" stroke="#f3928e" stroke-width="1.3"/>
<line x1="495.4" y1="147.1" x2="510.6" y2="147.1" stroke="#707070" stroke-width="0.7"/>
<circle cx="380.4" cy="147.1" r="0.6" fill="#333"/>
<text x="393.0" y="139.1" font-size="2.4" fill="#2f8ae6" font-weight="bold" textLength="7.6" lengthAdjust="spacingAndGlyphs">SS421A</text>
<text x="389.7" y="141.4" font-size="3.2" fill="#2f8ae6" font-weight="bold" textLength="14.2" lengthAdjust="spacingAndGlyphs" stroke="#2f8ae6" stroke-width="0.45">SS421A NO</text>
<path d="M393.8 141.1l6 4.4m0-4.4l-6 4.4" stroke="#2f8ae6" stroke-width="1" fill="none"/>
<text x="395.0" y="143.6" font-size="2" fill="#2f8ae6" font-weight="bold" textLength="3.6" lengthAdjust="spacingAndGlyphs" stroke="#2f8ae6" stroke-width="0.3">421</text>
<path d="M394.4 147.29999999999998a2.4 2.4 0 0 1 4.8 0" fill="none" stroke="#222" stroke-width="0.8"/>
<text x="438.0" y="140.1" font-size="2.4" fill="#2f8ae6" font-weight="bold" textLength="7.6" lengthAdjust="spacingAndGlyphs">CR421B</text>
<text x="434.3" y="142.4" font-size="3.2" fill="#2f8ae6" font-weight="bold" textLength="15.4" lengthAdjust="spacingAndGlyphs" stroke="#2f8ae6" stroke-width="0.45">CR421B NO</text>
<text x="438.0" y="144.3" font-size="2.4" fill="#2f8ae6" font-weight="bold" textLength="8.0" lengthAdjust="spacingAndGlyphs" stroke="#2f8ae6" stroke-width="0.3">4.21 N.O.</text>
<text x="439.4" y="146.1" font-size="2.2" fill="#2f8ae6" font-weight="bold" textLength="4.6" lengthAdjust="spacingAndGlyphs" stroke="#2f8ae6" stroke-width="0.3">4.22</text>
<line x1="438.8" y1="147.4" x2="444.8" y2="147.4" stroke="#333" stroke-width="0.9"/>
<text x="416.9" y="146.5" font-size="2.4" fill="#8fc43a" font-weight="bold" textLength="3.4" lengthAdjust="spacingAndGlyphs" stroke="#8fc43a" stroke-width="0.3">421</text>
<text x="467.1" y="146.5" font-size="2.4" fill="#8fc43a" font-weight="bold" textLength="3.4" lengthAdjust="spacingAndGlyphs" stroke="#8fc43a" stroke-width="0.3">421A</text>
<text x="495.0" y="143.5" font-size="2.8" fill="#2f8ae6" font-weight="bold" textLength="6.0" lengthAdjust="spacingAndGlyphs" stroke="#2f8ae6" stroke-width="0.3">LT42</text>
<line x1="494.6" y1="144.1" x2="501.4" y2="144.1" stroke="#2f8ae6" stroke-width="0.5"/>
<circle cx="498" cy="147.1" r="2.3" fill="#fff" stroke="#222" stroke-width="0.7"/>
<line x1="416.3" y1="147.1" x2="416.3" y2="160.2" stroke="#e05a5a" stroke-width="0.9"/>
<line x1="400.8" y1="160.2" x2="416.3" y2="160.2" stroke="#f3928e" stroke-width="1.1"/>
<line x1="380.4" y1="160.2" x2="400.8" y2="160.2" stroke="#707070" stroke-width="0.7"/>
<circle cx="416.3" cy="147.1" r="0.7" fill="#333"/><circle cx="380.4" cy="160.2" r="0.6" fill="#333"/>
<text x="394.0" y="157.7" font-size="2.6" fill="#2f8ae6" font-weight="bold" textLength="5.6" lengthAdjust="spacingAndGlyphs" stroke="#2f8ae6" stroke-width="0.3">PB42</text>
<line x1="394" y1="158.6" x2="399.6" y2="158.6" stroke="#2f8ae6" stroke-width="0.5"/>
<text x="395.4" y="160.4" font-size="1.8" fill="#2f8ae6" font-weight="bold" textLength="3.0" lengthAdjust="spacingAndGlyphs" stroke="#2f8ae6" stroke-width="0.3">4.2</text>
<text x="390.0" y="165.8" font-size="2.8" fill="#111" font-weight="bold" textLength="14.0" lengthAdjust="spacingAndGlyphs" stroke="#111" stroke-width="0.12">MOTOR RUN</text>
<rect x="395.6" y="161.6" width="1.4" height="1" fill="#222"/>
<line x1="478.4" y1="147.1" x2="478.4" y2="160.2" stroke="#e05a5a" stroke-width="0.9"/>
<line x1="478.4" y1="160.2" x2="495.4" y2="160.2" stroke="#f3928e" stroke-width="1.1"/>
<line x1="495.4" y1="160.2" x2="510.6" y2="160.2" stroke="#707070" stroke-width="0.7"/>
<circle cx="478.4" cy="147.1" r="0.7" fill="#333"/>
<text x="495.0" y="156.6" font-size="2.8" fill="#2f8ae6" font-weight="bold" textLength="6.0" lengthAdjust="spacingAndGlyphs" stroke="#2f8ae6" stroke-width="0.3">M414</text>
<rect x="495.6" y="157.6" width="4.8" height="3.4" fill="#d9ebfb" stroke="#2f8ae6" stroke-width="0.5"/>
<path d="M495.4 161.1h5.2M495.4 163.1h5.2M495.8 161.1l4.4 2m0-2l-4.4 2" stroke="#222" stroke-width="0.7" fill="none"/>
<text x="512.4" y="147.2" font-size="3" fill="#2f8ae6" font-weight="bold" textLength="11.0" lengthAdjust="spacingAndGlyphs" stroke="#2f8ae6" stroke-width="0.3">CONVEYOR</text>
<text x="512.4" y="149.3" font-size="2.2" fill="#2f8ae6" font-weight="bold" textLength="7.6" lengthAdjust="spacingAndGlyphs" stroke="#2f8ae6" stroke-width="0.3">4.22</text>
<text x="512.4" y="152.5" font-size="2.8" fill="#111" font-weight="bold" textLength="23.6" lengthAdjust="spacingAndGlyphs" stroke="#111" stroke-width="0.12">MOTOR STARTER RUN</text>
<text x="512.4" y="160.3" font-size="3" fill="#2f8ae6" font-weight="bold" textLength="11.0" lengthAdjust="spacingAndGlyphs" stroke="#2f8ae6" stroke-width="0.3">SOLENOID</text>
<text x="512.4" y="162.5" font-size="2.4" fill="#2f8ae6" font-weight="bold" textLength="8.6" lengthAdjust="spacingAndGlyphs" stroke="#2f8ae6" stroke-width="0.3">VALVE</text>
<line x1="380.4" y1="178.4" x2="400.8" y2="178.4" stroke="#707070" stroke-width="0.7"/>
<line x1="400.8" y1="178.4" x2="495.4" y2="178.4" stroke="#f3928e" stroke-width="1.3"/>
<line x1="495.4" y1="178.4" x2="510.6" y2="178.4" stroke="#707070" stroke-width="0.7"/>
<circle cx="380.4" cy="178.4" r="0.6" fill="#333"/>
<text x="393.0" y="170.4" font-size="2.4" fill="#2f8ae6" font-weight="bold" textLength="7.6" lengthAdjust="spacingAndGlyphs">SS421A</text>
<text x="389.7" y="172.7" font-size="3.2" fill="#2f8ae6" font-weight="bold" textLength="14.2" lengthAdjust="spacingAndGlyphs" stroke="#2f8ae6" stroke-width="0.45">SS421A NO</text>
<path d="M393.8 172.4l6 4.4m0-4.4l-6 4.4" stroke="#2f8ae6" stroke-width="1" fill="none"/>
<text x="395.0" y="174.9" font-size="2" fill="#2f8ae6" font-weight="bold" textLength="3.6" lengthAdjust="spacingAndGlyphs" stroke="#2f8ae6" stroke-width="0.3">421</text>
<path d="M394.4 178.6a2.4 2.4 0 0 1 4.8 0" fill="none" stroke="#222" stroke-width="0.8"/>
<text x="438.0" y="171.4" font-size="2.4" fill="#2f8ae6" font-weight="bold" textLength="7.6" lengthAdjust="spacingAndGlyphs">CR421B</text>
<text x="434.3" y="173.7" font-size="3.2" fill="#2f8ae6" font-weight="bold" textLength="15.4" lengthAdjust="spacingAndGlyphs" stroke="#2f8ae6" stroke-width="0.45">CR421B NO</text>
<text x="438.0" y="175.6" font-size="2.4" fill="#2f8ae6" font-weight="bold" textLength="8.0" lengthAdjust="spacingAndGlyphs" stroke="#2f8ae6" stroke-width="0.3">4.21 N.O.</text>
<text x="439.4" y="177.4" font-size="2.2" fill="#2f8ae6" font-weight="bold" textLength="4.6" lengthAdjust="spacingAndGlyphs" stroke="#2f8ae6" stroke-width="0.3">4.22</text>
<line x1="438.8" y1="178.70000000000002" x2="444.8" y2="178.70000000000002" stroke="#333" stroke-width="0.9"/>
<text x="416.9" y="177.8" font-size="2.4" fill="#8fc43a" font-weight="bold" textLength="3.4" lengthAdjust="spacingAndGlyphs" stroke="#8fc43a" stroke-width="0.3">421</text>
<text x="467.1" y="177.8" font-size="2.4" fill="#8fc43a" font-weight="bold" textLength="3.4" lengthAdjust="spacingAndGlyphs" stroke="#8fc43a" stroke-width="0.3">421A</text>
<text x="495.0" y="174.8" font-size="2.8" fill="#2f8ae6" font-weight="bold" textLength="6.0" lengthAdjust="spacingAndGlyphs" stroke="#2f8ae6" stroke-width="0.3">LT42</text>
<line x1="494.6" y1="175.4" x2="501.4" y2="175.4" stroke="#2f8ae6" stroke-width="0.5"/>
<circle cx="498" cy="178.4" r="2.3" fill="#fff" stroke="#222" stroke-width="0.7"/>
<line x1="416.3" y1="178.4" x2="416.3" y2="191.5" stroke="#e05a5a" stroke-width="0.9"/>
<line x1="400.8" y1="191.5" x2="416.3" y2="191.5" stroke="#f3928e" stroke-width="1.1"/>
<line x1="380.4" y1="191.5" x2="400.8" y2="191.5" stroke="#707070" stroke-width="0.7"/>
<circle cx="416.3" cy="178.4" r="0.7" fill="#333"/><circle cx="380.4" cy="191.5" r="0.6" fill="#333"/>
<text x="394.0" y="189.0" font-size="2.6" fill="#2f8ae6" font-weight="bold" textLength="5.6" lengthAdjust="spacingAndGlyphs" stroke="#2f8ae6" stroke-width="0.3">PB42</text>
<line x1="394" y1="189.9" x2="399.6" y2="189.9" stroke="#2f8ae6" stroke-width="0.5"/>
<text x="395.4" y="191.7" font-size="1.8" fill="#2f8ae6" font-weight="bold" textLength="3.0" lengthAdjust="spacingAndGlyphs" stroke="#2f8ae6" stroke-width="0.3">4.2</text>
<text x="390.0" y="197.1" font-size="2.8" fill="#111" font-weight="bold" textLength="14.0" lengthAdjust="spacingAndGlyphs" stroke="#111" stroke-width="0.12">MOTOR RUN</text>
<rect x="395.6" y="192.9" width="1.4" height="1" fill="#222"/>
<line x1="478.4" y1="178.4" x2="478.4" y2="191.5" stroke="#e05a5a" stroke-width="0.9"/>
<line x1="478.4" y1="191.5" x2="495.4" y2="191.5" stroke="#f3928e" stroke-width="1.1"/>
<line x1="495.4" y1="191.5" x2="510.6" y2="191.5" stroke="#707070" stroke-width="0.7"/>
<circle cx="478.4" cy="178.4" r="0.7" fill="#333"/>
<text x="495.0" y="187.9" font-size="2.8" fill="#2f8ae6" font-weight="bold" textLength="6.0" lengthAdjust="spacingAndGlyphs" stroke="#2f8ae6" stroke-width="0.3">M414</text>
<rect x="495.6" y="188.9" width="4.8" height="3.4" fill="#d9ebfb" stroke="#2f8ae6" stroke-width="0.5"/>
<path d="M495.4 192.4h5.2M495.4 194.4h5.2M495.8 192.4l4.4 2m0-2l-4.4 2" stroke="#222" stroke-width="0.7" fill="none"/>
<text x="512.4" y="178.5" font-size="3" fill="#2f8ae6" font-weight="bold" textLength="11.0" lengthAdjust="spacingAndGlyphs" stroke="#2f8ae6" stroke-width="0.3">CONVEYOR</text>
<text x="512.4" y="180.6" font-size="2.2" fill="#2f8ae6" font-weight="bold" textLength="7.6" lengthAdjust="spacingAndGlyphs" stroke="#2f8ae6" stroke-width="0.3">4.22</text>
<text x="512.4" y="183.8" font-size="2.8" fill="#111" font-weight="bold" textLength="19.6" lengthAdjust="spacingAndGlyphs" stroke="#111" stroke-width="0.12">MOTOR FAULT</text>
<text x="512.4" y="191.6" font-size="3" fill="#2f8ae6" font-weight="bold" textLength="11.0" lengthAdjust="spacingAndGlyphs" stroke="#2f8ae6" stroke-width="0.3">SOLENOID</text>
<text x="512.4" y="193.8" font-size="2.4" fill="#2f8ae6" font-weight="bold" textLength="8.6" lengthAdjust="spacingAndGlyphs" stroke="#2f8ae6" stroke-width="0.3">VALVE</text>
<rect x="377" y="221.4" width="3" height="1.6" fill="#c9e27a"/>
<rect x="506.4" y="221.4" width="3" height="1.6" fill="#c9e27a"/>
<line x1="380.4" y1="287.6" x2="404.6" y2="287.6" stroke="#707070" stroke-width="0.7"/>
<line x1="404.6" y1="287.6" x2="494.8" y2="287.6" stroke="#f3928e" stroke-width="1.3"/>
<line x1="494.8" y1="287.6" x2="510.6" y2="287.6" stroke="#707070" stroke-width="0.7"/>
<circle cx="380.4" cy="287.6" r="0.6" fill="#333"/>
<path d="M402.2 286.70000000000005a1.2 1.2 0 0 0 0 2.2l1.6 0z" fill="#444"/>
<line x1="403.59999999999997" y1="288.20000000000005" x2="405.4" y2="289.5" stroke="#555" stroke-width="0.6"/>
<text x="401.6" y="284.9" font-size="2.4" fill="#222" font-weight="bold" textLength="5.0" lengthAdjust="spacingAndGlyphs" stroke="#222" stroke-width="0.2">CR43</text>
<text x="404.6" y="290.8" font-size="2.4" fill="#2f8ae6" font-weight="bold" textLength="4.2" lengthAdjust="spacingAndGlyphs" stroke="#2f8ae6" stroke-width="0.3">4.30</text>
<text x="404.0" y="284.6" font-size="2.2" fill="#333" font-weight="normal" textLength="6.0" lengthAdjust="spacingAndGlyphs">4321</text>
<line x1="441.8" y1="286.0" x2="441.8" y2="289.20000000000005" stroke="#333" stroke-width="0.7"/>
<line x1="439.8" y1="287.6" x2="441.4" y2="287.6" stroke="#222" stroke-width="1"/>
<line x1="442.6" y1="287.20000000000005" x2="444.4" y2="286.40000000000003" stroke="#222" stroke-width="0.8"/>
<line x1="441.8" y1="289.6" x2="441.8" y2="311.20000000000005" stroke="#666" stroke-width="0.5" stroke-dasharray="2.2 1.2"/>
<text x="457.3" y="287.0" font-size="2.4" fill="#8fc43a" font-weight="bold" textLength="3.4" lengthAdjust="spacingAndGlyphs" stroke="#8fc43a" stroke-width="0.3">432</text>
<path d="M474.40000000000003 286.70000000000005a1.2 1.2 0 0 0 0 2.2l1.6 0z" fill="#444"/>
<line x1="475.8" y1="288.20000000000005" x2="477.6" y2="289.5" stroke="#555" stroke-width="0.6"/>
<text x="473.8" y="284.9" font-size="2.4" fill="#222" font-weight="bold" textLength="5.0" lengthAdjust="spacingAndGlyphs" stroke="#222" stroke-width="0.2">CR43</text>
<text x="476.8" y="290.8" font-size="2.4" fill="#2f8ae6" font-weight="bold" textLength="4.2" lengthAdjust="spacingAndGlyphs" stroke="#2f8ae6" stroke-width="0.3">4.30</text>
<text x="495.0" y="284.2" font-size="2.8" fill="#2f8ae6" font-weight="bold" textLength="6.0" lengthAdjust="spacingAndGlyphs" stroke="#2f8ae6" stroke-width="0.3">LT43</text>
<circle cx="498" cy="287.6" r="2.2" fill="#fff" stroke="#222" stroke-width="0.7"/>
<text x="512.4" y="287.3" font-size="3" fill="#2f8ae6" font-weight="bold" textLength="7.6" lengthAdjust="spacingAndGlyphs" stroke="#2f8ae6" stroke-width="0.3">LIGHT</text>
<text x="520.8" y="286.6" font-size="2.2" fill="#2f8ae6" font-weight="bold" textLength="5.2" lengthAdjust="spacingAndGlyphs" stroke="#2f8ae6" stroke-width="0.3">4.32</text>
<text x="512.4" y="289.2" font-size="2.2" fill="#2f8ae6" font-weight="bold" textLength="6.6" lengthAdjust="spacingAndGlyphs" stroke="#2f8ae6" stroke-width="0.3">4.33</text>
<text transform="translate(514.6,295.6) rotate(-90)" font-size="2.4" font-weight="bold" fill="#111" textLength="5">RUN</text>
<line x1="380.4" y1="313" x2="404.6" y2="313" stroke="#707070" stroke-width="0.7"/>
<line x1="404.6" y1="313" x2="494.8" y2="313" stroke="#f3928e" stroke-width="1.3"/>
<line x1="494.8" y1="313" x2="510.6" y2="313" stroke="#707070" stroke-width="0.7"/>
<circle cx="380.4" cy="313" r="0.6" fill="#333"/>
<path d="M402.2 312.1a1.2 1.2 0 0 0 0 2.2l1.6 0z" fill="#444"/>
<line x1="403.59999999999997" y1="313.6" x2="405.4" y2="314.9" stroke="#555" stroke-width="0.6"/>
<text x="401.6" y="310.3" font-size="2.4" fill="#222" font-weight="bold" textLength="5.0" lengthAdjust="spacingAndGlyphs" stroke="#222" stroke-width="0.2">CR43</text>
<text x="404.6" y="316.2" font-size="2.4" fill="#2f8ae6" font-weight="bold" textLength="4.2" lengthAdjust="spacingAndGlyphs" stroke="#2f8ae6" stroke-width="0.3">4.31</text>
<text x="404.0" y="310.0" font-size="2.2" fill="#333" font-weight="normal" textLength="6.0" lengthAdjust="spacingAndGlyphs">4321</text>
<line x1="441.8" y1="311.4" x2="441.8" y2="314.6" stroke="#333" stroke-width="0.7"/>
<line x1="439.8" y1="313" x2="441.4" y2="313" stroke="#222" stroke-width="1"/>
<line x1="442.6" y1="312.6" x2="444.4" y2="311.8" stroke="#222" stroke-width="0.8"/>
<line x1="440.2" y1="314.9" x2="443.6" y2="314.9" stroke="#555" stroke-width="0.6"/>
<line x1="441.8" y1="315" x2="441.8" y2="315" stroke="#666" stroke-width="0.5" stroke-dasharray="2.2 1.2"/>
<text x="457.3" y="312.4" font-size="2.4" fill="#8fc43a" font-weight="bold" textLength="3.4" lengthAdjust="spacingAndGlyphs" stroke="#8fc43a" stroke-width="0.3">432</text>
<path d="M474.40000000000003 312.1a1.2 1.2 0 0 0 0 2.2l1.6 0z" fill="#444"/>
<line x1="475.8" y1="313.6" x2="477.6" y2="314.9" stroke="#555" stroke-width="0.6"/>
<text x="473.8" y="310.3" font-size="2.4" fill="#222" font-weight="bold" textLength="5.0" lengthAdjust="spacingAndGlyphs" stroke="#222" stroke-width="0.2">CR43</text>
<text x="476.8" y="316.2" font-size="2.4" fill="#2f8ae6" font-weight="bold" textLength="4.2" lengthAdjust="spacingAndGlyphs" stroke="#2f8ae6" stroke-width="0.3">4.31</text>
<text x="495.0" y="309.6" font-size="2.8" fill="#2f8ae6" font-weight="bold" textLength="6.0" lengthAdjust="spacingAndGlyphs" stroke="#2f8ae6" stroke-width="0.3">LT43</text>
<circle cx="498" cy="313" r="2.2" fill="#fff" stroke="#222" stroke-width="0.7"/>
<text x="512.4" y="312.7" font-size="3" fill="#2f8ae6" font-weight="bold" textLength="7.6" lengthAdjust="spacingAndGlyphs" stroke="#2f8ae6" stroke-width="0.3">LIGHT</text>
<text x="520.8" y="312.0" font-size="2.2" fill="#2f8ae6" font-weight="bold" textLength="5.2" lengthAdjust="spacingAndGlyphs" stroke="#2f8ae6" stroke-width="0.3">4.32</text>
<text x="512.4" y="314.6" font-size="2.2" fill="#2f8ae6" font-weight="bold" textLength="6.6" lengthAdjust="spacingAndGlyphs" stroke="#2f8ae6" stroke-width="0.3">4.33</text>
<text transform="translate(514.6,321) rotate(-90)" font-size="2.4" font-weight="bold" fill="#111" textLength="5">RUN</text>
<text x="435.6" y="279.9" font-size="2.6" fill="#2f8ae6" font-weight="bold" textLength="12.4" lengthAdjust="spacingAndGlyphs" stroke="#2f8ae6" stroke-width="0.3">SS 432 PDS</text>
<text x="438.0" y="282.4" font-size="2.2" fill="#2f8ae6" font-weight="bold" textLength="7.0" lengthAdjust="spacingAndGlyphs" stroke="#2f8ae6" stroke-width="0.3">4.32</text>
<line x1="435.4" y1="284.6" x2="449" y2="284.6" stroke="#cbd23c" stroke-width="1"/>
<text x="734" y="106" font-size="9" font-weight="bold" fill="#d2d2d2" stroke="#bdbdbd" stroke-width="0.4" text-anchor="middle">N</text>
<text x="711" y="129.3" font-size="9" font-weight="bold" fill="#d2d2d2" stroke="#bdbdbd" stroke-width="0.4" text-anchor="middle">W</text>
<text x="758" y="129.3" font-size="9" font-weight="bold" fill="#d2d2d2" stroke="#bdbdbd" stroke-width="0.4" text-anchor="middle">E</text>
<text x="734" y="153.5" font-size="9" font-weight="bold" fill="#d2d2d2" stroke="#bdbdbd" stroke-width="0.4" text-anchor="middle">S</text>
<rect x="724.2" y="116.4" width="20.8" height="21" fill="#ececec" stroke="#b4b4b4" stroke-width="0.8"/>
<rect x="726" y="118.2" width="17.2" height="17.4" fill="#efefef" stroke="#dcdcdc" stroke-width="0.5"/>
<text x="730.2" y="128.4" font-size="4.2" fill="#8a8a8a" font-weight="bold" textLength="8.8" lengthAdjust="spacingAndGlyphs">TOP</text>
<rect x="724" y="164.6" width="21.6" height="6.6" fill="#ebebeb"/>
<text x="726.4" y="169.3" font-size="3.8" fill="#a8a8a8" font-weight="bold" textLength="9.0" lengthAdjust="spacingAndGlyphs">WCS</text>
<path d="M739.9 167.4h2.2l-1.1 1.2z" fill="#cfcfcf"/>
<rect x="739.4" y="86.4" width="5.8" height="3.2" fill="#6a6a6a"/>
<rect x="740.2" y="86.8" width="3.8" height="0.8" fill="#ddd"/>
<rect x="749.6" y="84.4" width="4.8" height="5.4" fill="none" stroke="#555" stroke-width="0.8"/>
<rect x="751" y="86" width="2" height="2.2" fill="#666"/>
<path d="M759.6 84.6l4.4 2.6-4.4 2.6m4.4-5.2l-4.4 2.6 4.4 2.6" stroke="#555" stroke-width="0.8" fill="none"/>
<line x1="650.4" y1="238.2" x2="690.4" y2="238.2" stroke="#3a3a3a" stroke-width="0.7"/>
<line x1="670.2" y1="219.4" x2="670.2" y2="258" stroke="#3a3a3a" stroke-width="0.7"/>
<rect x="668.6" y="236.6" width="3.2" height="3.2" fill="#fff" stroke="#3a3a3a" stroke-width="0.6"/>
<rect x="125.6" y="380.8" width="641.4" height="1.5" fill="#d2d3d5"/>
<rect x="125.6" y="382.2" width="641.4" height="1.2" fill="#5e6168"/>
<rect x="137.8" y="383.2" width="629.2" height="20.8" fill="#c9c9c9"/>
<text x="139.6" y="392.6" font-size="6" fill="#262626" font-weight="normal" textLength="60.7" lengthAdjust="spacingAndGlyphs" font-family='"Liberation Mono",monospace'>Command: _options</text>
<text x="139.6" y="399.9" font-size="6" fill="#262626" font-weight="normal" textLength="28.6" lengthAdjust="spacingAndGlyphs" font-family='"Liberation Mono",monospace'>Command:</text>
</svg>
</body></html>
